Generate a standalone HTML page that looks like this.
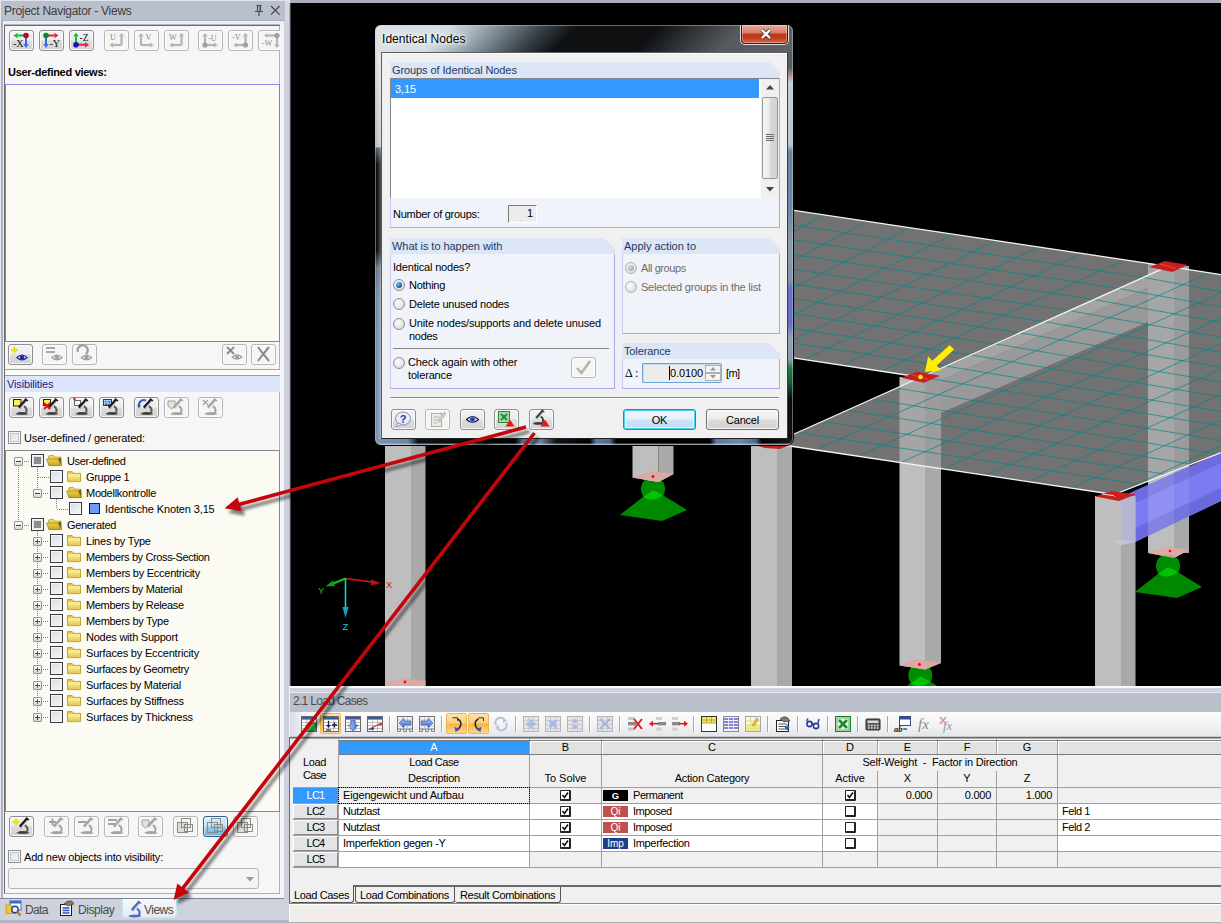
<!DOCTYPE html>
<html><head><meta charset="utf-8"><title>RFEM</title>
<style>
html,body{margin:0;padding:0;}
body{width:1221px;height:923px;position:relative;overflow:hidden;background:#f0f0f0;font-family:"Liberation Sans",sans-serif;font-size:11px;color:#000;}
div{position:absolute;box-sizing:border-box;}
svg{position:absolute;overflow:visible;}
.t{white-space:nowrap;line-height:14px;height:14px;}
.b{border:1px solid #8e8f8f;border-radius:3px;background:linear-gradient(#f4f4f4 0%,#ececec 48%,#dcdcdc 52%,#d2d2d2 100%);box-shadow:inset 0 0 0 1px rgba(255,255,255,.75);}
.bd{border:1px solid #b4b6ba;border-radius:3px;background:#f5f5f5;box-shadow:inset 0 0 0 1px rgba(255,255,255,.8);}
.cb{border:1px solid #8e8f8f;background:linear-gradient(135deg,#dcdfe4,#f6f6f8);box-shadow:inset 0 0 0 1px #f4f4f4, inset 0 0 0 2px #c4c8d0;}
.tcb{border:1px solid #3c3c3c;background:linear-gradient(135deg,#d8dce6,#f6f6fa);box-shadow:inset 0 0 0 1px #f4f6fa;}
</style></head>
<body>
<svg style="left:0;top:0" width="0" height="0"><defs><linearGradient id="fo" x1="0" y1="0" x2="0" y2="1"><stop offset="0" stop-color="#ecd248"/><stop offset="1" stop-color="#c8a41c"/></linearGradient><linearGradient id="fg" x1="0" y1="0" x2="0" y2="1"><stop offset="0" stop-color="#fcf4b0"/><stop offset="1" stop-color="#e8c840"/></linearGradient><linearGradient id="ga" x1="0" x2="1"><stop offset="0" stop-color="#b8d4fc"/><stop offset="1" stop-color="#3a6ad0"/></linearGradient><linearGradient id="gb" x1="0" y1="0" x2="0" y2="1"><stop offset="0" stop-color="#a8c8fc"/><stop offset="1" stop-color="#3a6ad0"/></linearGradient></defs></svg>
<svg style="left:0;top:0" width="1221" height="923" viewBox="0 0 1221 923"><defs><clipPath id="vp"><rect x="290" y="3" width="931" height="683"/></clipPath><clipPath id="s1"><polygon points="640.0,187.3 1168.0,266.3 919.5,377.0 640.0,334.7"/></clipPath><clipPath id="s2"><polygon points="773.0,443.5 1114.0,494.5 1221.0,452.5 1221.0,274.6 1168.0,266.3"/></clipPath><clipPath id="s12"><polygon points="640.0,187.3 1168.0,266.3 919.5,377.0 640.0,334.7"/><polygon points="773.0,443.5 1114.0,494.5 1221.0,452.5 1221.0,274.6 1168.0,266.3"/></clipPath></defs><g clip-path="url(#vp)"><rect x="290" y="3" width="931" height="683" fill="#000"/><rect x="1148" y="266" width="26" height="287" fill="#bebebe"/><rect x="1174" y="266" width="15" height="287" fill="#a9a9a9"/><polygon points="1148,553 1168,547 1189,550 1174,558" fill="#dcaaa6"/><circle cx="1170" cy="551" r="1.3" fill="#f00"/><polygon points="1168,566 1135.0,592.0 1177.0,598.0 1202.0,587.0" fill="#008800"/><circle cx="1168" cy="566" r="12.0" fill="#008c00"/><path d="M1168 567 L1158.0 574.0 Q1168 580.0 1178.0 572.0 Z" fill="#00c400"/><polygon points="1148,553 1168,547 1189,550 1174,558" fill="#dcaaa6" opacity=".9"/><circle cx="1170" cy="551" r="1.3" fill="#f00"/><polygon points="920.3,675.4 887.3,701.4 929.3,707.4 954.3,696.4" fill="#008800"/><circle cx="920.3" cy="675.4" r="12.0" fill="#008c00"/><path d="M920.3 676.4 L910.3 683.4 Q920.3 689.4 930.3 681.4 Z" fill="#00c400"/><polygon points="899.5,377 925,377 925,669.5 899.5,665.6" fill="#bebebe"/><polygon points="925,377 941,377 941,663 925,669.5" fill="#a9a9a9"/><polygon points="899.5,665.6 914.7,659 941,663 925.2,669.5" fill="#dca8a4"/><circle cx="919.5" cy="664.5" r="1.4" fill="#f00"/><rect x="751" y="444" width="26" height="242" fill="#bebebe"/><rect x="777" y="444" width="15" height="242" fill="#a9a9a9"/><rect x="385" y="444" width="26" height="242" fill="#bebebe"/><rect x="411" y="444" width="14.5" height="242" fill="#a9a9a9"/><polygon points="385,686 385,683 404,678 425.5,681 425.5,686" fill="#dcaaa6"/><circle cx="405" cy="682" r="1.4" fill="#f00"/><polygon points="653,489 620.0,515.0 662.0,521.0 687.0,510.0" fill="#008800"/><circle cx="653" cy="489" r="12.0" fill="#008c00"/><path d="M653 490 L643.0 497.0 Q653 503.0 663.0 495.0 Z" fill="#00c400"/><polygon points="632.5,477.5 652,471 673.5,474 658.5,482" fill="#dcaaa6"/><polygon points="632.5,444 658.5,444 658.5,482 632.5,477.5" fill="#bebebe"/><polygon points="658.5,444 673.5,444 673.5,474 658.5,482" fill="#a9a9a9"/><polygon points="632.5,477.5 652,471 673.5,474 658.5,482" fill="#dcaaa6"/><circle cx="653" cy="476.5" r="1.5" fill="#f00"/><polygon points="1121,497 1221,452.5 1221,501 1135,542 1114,545 1121,541" fill="#7c7cf2"/><polygon points="1121,497 1221,452.5 1221,463 1135,503" fill="#6c6cde"/><polygon points="1135,528 1221,488 1221,501 1135,542 1114,545" fill="#6a6adc"/><clipPath id="bm"><polygon points="1121,497 1221,452.5 1221,501 1135,542"/></clipPath><g clip-path="url(#bm)"><rect x="1148" y="440" width="26" height="120" fill="#fff" opacity=".16"/><rect x="1174" y="440" width="15" height="120" fill="#fff" opacity=".08"/></g><rect x="1095" y="496" width="26" height="190" fill="#bebebe"/><rect x="1121" y="496" width="14.5" height="190" fill="#a9a9a9"/><polygon points="1121,496 1135.5,496 1135.5,542 1121,545" fill="#b8b8d8" opacity=".85"/><polygon points="1112,541.5 1121,540 1135.5,541.5 1121,545.5" fill="#c8c8e0" opacity=".7"/><polygon points="640.0,187.3 1168.0,266.3 919.5,377.0 640.0,334.7" fill="#727272"/><polygon points="773.0,443.5 1114.0,494.5 1221.0,452.5 1221.0,274.6 1168.0,266.3" fill="#727272"/><g clip-path="url(#s12)"><polygon points="919.5,377 1168,266.3 1168,279 941,380" fill="#a4a4a4"/><polygon points="941,380 1168,279 1148,322 941,413" fill="#999999"/><rect x="899.5" y="377" width="25.5" height="140" fill="#a5a5a5"/><rect x="925" y="377" width="16" height="140" fill="#9c9c9c"/><rect x="1148" y="262" width="26" height="262" fill="#a6a6a6"/><rect x="1174" y="262" width="15" height="262" fill="#9b9b9b"/></g><g clip-path="url(#s1)" stroke="#008888" stroke-width="1" stroke-opacity=".7" fill="none"><line x1="1125.0" y1="259.9" x2="881.1" y2="371.2"/><line x1="1082.0" y1="253.4" x2="842.7" y2="365.3"/><line x1="1039.0" y1="247.0" x2="804.3" y2="359.5"/><line x1="996.0" y1="240.6" x2="765.9" y2="353.7"/><line x1="953.0" y1="234.1" x2="727.5" y2="347.8"/><line x1="910.0" y1="227.7" x2="689.1" y2="342.0"/><line x1="867.0" y1="221.3" x2="650.7" y2="336.1"/><line x1="824.0" y1="214.8" x2="612.3" y2="330.3"/><line x1="781.0" y1="208.4" x2="573.9" y2="324.5"/><line x1="738.0" y1="202.0" x2="535.5" y2="318.6"/><line x1="695.0" y1="195.5" x2="497.1" y2="312.8"/><line x1="652.0" y1="189.1" x2="458.7" y2="307.0"/><line x1="609.0" y1="182.7" x2="420.3" y2="301.1"/><line x1="1143.2" y1="277.4" x2="640.0" y2="202.0"/><line x1="1118.3" y1="288.4" x2="640.0" y2="216.8"/><line x1="1093.5" y1="299.5" x2="640.0" y2="231.5"/><line x1="1068.6" y1="310.6" x2="640.0" y2="246.3"/><line x1="1043.8" y1="321.6" x2="640.0" y2="261.0"/><line x1="1018.9" y1="332.7" x2="640.0" y2="275.7"/><line x1="994.0" y1="343.8" x2="640.0" y2="290.5"/><line x1="969.2" y1="354.9" x2="640.0" y2="305.2"/><line x1="944.4" y1="365.9" x2="640.0" y2="320.0"/></g><g clip-path="url(#s2)" stroke="#008888" stroke-width="1" stroke-opacity=".7" fill="none"><line x1="797.7" y1="432.4" x2="1139.6" y2="484.3"/><line x1="822.4" y1="421.4" x2="1165.2" y2="474.2"/><line x1="847.1" y1="410.3" x2="1190.8" y2="464.0"/><line x1="871.8" y1="399.2" x2="1216.4" y2="453.8"/><line x1="896.4" y1="388.1" x2="1242.0" y2="443.7"/><line x1="921.1" y1="377.1" x2="1267.6" y2="433.5"/><line x1="945.8" y1="366.0" x2="1293.2" y2="423.4"/><line x1="970.5" y1="354.9" x2="1318.8" y2="413.2"/><line x1="995.2" y1="343.8" x2="1344.4" y2="403.0"/><line x1="1019.9" y1="332.8" x2="1370.0" y2="392.9"/><line x1="1044.6" y1="321.7" x2="1395.6" y2="382.7"/><line x1="1069.2" y1="310.6" x2="1421.2" y2="372.5"/><line x1="1093.9" y1="299.5" x2="1446.8" y2="362.4"/><line x1="1118.6" y1="288.5" x2="1472.4" y2="352.2"/><line x1="1143.3" y1="277.4" x2="1498.0" y2="342.1"/><line x1="815.6" y1="449.9" x2="1209.5" y2="272.8"/><line x1="858.2" y1="456.2" x2="1251.0" y2="279.3"/><line x1="900.9" y1="462.6" x2="1292.5" y2="285.8"/><line x1="943.5" y1="469.0" x2="1334.0" y2="292.4"/><line x1="986.1" y1="475.4" x2="1375.5" y2="298.9"/><line x1="1028.8" y1="481.8" x2="1417.0" y2="305.4"/><line x1="1071.4" y1="488.1" x2="1458.5" y2="311.9"/><line x1="1114.0" y1="494.5" x2="1500.0" y2="318.4"/><line x1="1156.6" y1="500.9" x2="1541.5" y2="324.9"/><line x1="1199.2" y1="507.2" x2="1583.0" y2="331.5"/><line x1="1241.9" y1="513.6" x2="1624.5" y2="338.0"/><line x1="1284.5" y1="520.0" x2="1666.0" y2="344.5"/><line x1="1327.1" y1="526.4" x2="1707.5" y2="351.0"/></g><g stroke="#f4f4f4" stroke-width="1.3" fill="none"><polyline points="640.0,187.3 1168.0,266.3 1221.0,274.6"/><polyline points="640.0,334.7 919.5,377.0"/><polyline points="773.0,443.5 1168.0,266.3"/><polyline points="773.0,443.5 1114.0,494.5 1221.0,452.5"/></g><polygon points="1149,267 1165,261 1188,265 1172,272" fill="#c42020"/><path d="M1160 264 L1176 268.5" stroke="#f05050" stroke-width=".8"/><polygon points="901,377.8 917,371.8 940,375.8 924,382.8" fill="#c42020"/><path d="M912 374.8 L928 379.3" stroke="#f05050" stroke-width=".8"/><polygon points="1095,496.5 1111,491 1135.5,494.5 1119,501" fill="#c42020"/><path d="M1102 494 L1116 496" stroke="#fff" stroke-width=".8"/><circle cx="1115" cy="495" r="1.2" fill="#f00"/><polygon points="751,444 792,444 780,449 765,448" fill="#c42020"/><circle cx="920.5" cy="377" r="2.3" fill="#ffee00"/><path d="M925.0 372.0 L941.0 370.2 L936.7 365.5 L954.0 349.6 L949.7 344.9 L932.4 360.8 L928.1 356.2 Z" fill="#ffee00"/><line x1="345.5" y1="578.5" x2="372" y2="582" stroke="#e81010" stroke-width="1.6"/><polygon points="381,583 371,579.5 371,585.5" fill="#c01010"/><line x1="345.5" y1="578.5" x2="332" y2="584" stroke="#10c810" stroke-width="2"/><polygon points="325.5,586.5 333,580.5 335,586" fill="#10a010"/><line x1="345.5" y1="578.5" x2="345.5" y2="608" stroke="#10d0e0" stroke-width="1.6"/><polygon points="345.5,618 342.5,607 348.5,607" fill="#10a8b8"/><text x="386" y="588" font-size="9.5" fill="#e81010" font-family="Liberation Sans">X</text><text x="318" y="594" font-size="9.5" fill="#10c810" font-family="Liberation Sans">Y</text><text x="342.5" y="630" font-size="9.5" fill="#10d0e0" font-family="Liberation Sans">Z</text></g></svg>
<div style="left:290px;top:686px;width:931px;height:7px;background:#cdd2dd"></div>
<div style="left:290px;top:686px;width:931px;height:2px;background:#fafbfd"></div>
<div style="left:290px;top:692px;width:931px;height:1px;background:#e6e9f0"></div>
<div style="left:290px;top:693px;width:931px;height:19px;background:#b9c0cc"></div>
<div class="t ttl" style="left:293px;top:694.4px;font-size:12px;color:#4a4a4a;letter-spacing:-0.697px">2.1 Load Cases</div>
<div style="left:290px;top:712px;width:931px;height:25px;background:linear-gradient(90deg,rgba(214,219,232,1) 0,rgba(235,237,243,.6) 12px,rgba(240,240,244,0) 24px),linear-gradient(#fbfbfb,#f2f2f4 55%,#e4e5ea)"></div>
<div style="left:290px;top:736px;width:931px;height:1px;background:#c8c8cc"></div>
<svg style="left:301px;top:716px" width="16" height="16" viewBox="0 0 16 16" ><rect x=".5" y=".5" width="15" height="15" fill="#fcfcfc" stroke="#5a5a5a" stroke-width=".9"/><rect x="1" y="1" width="14" height="2.6" fill="#3a5aa8"/><path d="M1 6.5 h14 M1 9.5 h14 M1 12.5 h14 M5.5 3.6 v12 M10.5 3.6 v12" stroke="#9a9a9a" stroke-width=".6"/><rect x="7" y="7" width="8" height="8" fill="#58c058" stroke="#208020" stroke-width=".8"/></svg>
<div style="left:320px;top:713px;width:21px;height:21px;border:1px solid #e8b858;border-radius:2px;background:linear-gradient(#fde4a8 0%,#fbd080 45%,#f8b444 55%,#fbd890 100%)"></div>
<svg style="left:323px;top:716px" width="16" height="16" viewBox="0 0 16 16" ><rect x=".5" y=".5" width="15" height="15" fill="#fcfcfc" stroke="#5a5a5a" stroke-width=".9"/><rect x="1" y="1" width="14" height="2.6" fill="#3a5aa8"/><path d="M1 6.5 h14 M1 9.5 h14 M1 12.5 h14 M5.5 3.6 v12 M10.5 3.6 v12" stroke="#9a9a9a" stroke-width=".6"/><path d="M5.5 5 v5" stroke="#1a1a3a" stroke-width="1.3"/><path d="M3.2 9 h4.6 l-2.3 3z" fill="#1a1a3a"/><path d="M3 14 h5" stroke="#1a1a3a" stroke-width="1.1"/><path d="M9 9 h5 M11.5 6.5 v5" stroke="#1a1a3a" stroke-width="1.3"/></svg>
<svg style="left:345px;top:716px" width="16" height="16" viewBox="0 0 16 16" ><rect x=".5" y=".5" width="15" height="15" fill="#fcfcfc" stroke="#5a5a5a" stroke-width=".9"/><rect x="1" y="1" width="14" height="2.6" fill="#3a5aa8"/><path d="M1 6.5 h14 M1 9.5 h14 M1 12.5 h14 M5.5 3.6 v12 M10.5 3.6 v12" stroke="#9a9a9a" stroke-width=".6"/><path d="M6 4.5 h4 v4.5 h3 l-5 6 l-5 -6 h3z" fill="url(#ga)" stroke="#2a4a9c" stroke-width=".6"/></svg>
<svg style="left:367px;top:716px" width="16" height="16" viewBox="0 0 16 16" ><rect x=".5" y=".5" width="15" height="15" fill="#fcfcfc" stroke="#5a5a5a" stroke-width=".9"/><rect x="1" y="1" width="14" height="2.6" fill="#3a5aa8"/><path d="M1 6.5 h14 M1 9.5 h14 M1 12.5 h14 M5.5 3.6 v12 M10.5 3.6 v12" stroke="#9a9a9a" stroke-width=".6"/><path d="M1.5 13.5 L14.5 7" stroke="#b04848" stroke-width="1.1"/><path d="M1.5 13.8 l5.5 -2.6 l0 2.6z" fill="#2838d0"/><path d="M14.8 6.4 l-5 2.6 l5 0.6z" fill="#e02828"/></svg>
<div style="left:389px;top:716px;width:1px;height:16px;background:#a8a8a8"></div><div style="left:390px;top:716px;width:1px;height:16px;background:#fff"></div>
<svg style="left:397px;top:716px" width="16" height="16" viewBox="0 0 16 16" ><rect x=".5" y=".5" width="15" height="12.5" fill="#f0f0f0" stroke="#6a6a6a" stroke-width=".9"/><path d="M1 4 h14 M1 10 h14 M5.5 1 v12 M10.5 1 v12" stroke="#b8b8b8" stroke-width=".6"/><path d="M.5 13 v2.5 h3 v-2.5 M6.5 13 v2.5 h3 v-2.5 M12.5 13 v2.5 h3 v-2.5" stroke="#6a6a6a" stroke-width=".8" fill="none"/><path d="M2 7 L7 2.5 V5 H14 V9 H7 V11.5 Z" fill="url(#gb)" stroke="#2a4a9c" stroke-width=".6"/></svg>
<svg style="left:419px;top:716px" width="16" height="16" viewBox="0 0 16 16" ><rect x=".5" y=".5" width="15" height="12.5" fill="#f0f0f0" stroke="#6a6a6a" stroke-width=".9"/><path d="M1 4 h14 M1 10 h14 M5.5 1 v12 M10.5 1 v12" stroke="#b8b8b8" stroke-width=".6"/><path d="M.5 13 v2.5 h3 v-2.5 M6.5 13 v2.5 h3 v-2.5 M12.5 13 v2.5 h3 v-2.5" stroke="#6a6a6a" stroke-width=".8" fill="none"/><path d="M14 7 L9 2.5 V5 H2 V9 H9 V11.5 Z" fill="url(#gb)" stroke="#2a4a9c" stroke-width=".6"/></svg>
<div style="left:441px;top:716px;width:1px;height:16px;background:#a8a8a8"></div><div style="left:442px;top:716px;width:1px;height:16px;background:#fff"></div>
<div style="left:446px;top:713px;width:21px;height:21px;border:1px solid #e8b858;border-radius:2px;background:linear-gradient(#fde4a8 0%,#fbd080 45%,#f8b444 55%,#fbd890 100%)"></div>
<div style="left:468px;top:713px;width:21px;height:21px;border:1px solid #e8b858;border-radius:2px;background:linear-gradient(#fde4a8 0%,#fbd080 45%,#f8b444 55%,#fbd890 100%)"></div>
<svg style="left:449px;top:716px" width="16" height="16" viewBox="0 0 16 16" ><path d="M3.5 1.8 h5 v3" stroke="#333" stroke-width="1" fill="none"/><path d="M8.5 3 C13 5 13 10.5 8 14" stroke="#2a2a3a" stroke-width="1.6" fill="none"/><path d="M5.5 11 l5.5 2 l-4.5 3z" fill="#3a5ab8"/></svg>
<svg style="left:471px;top:716px" width="16" height="16" viewBox="0 0 16 16" ><path d="M12.5 5 v-3.2 h-5" stroke="#333" stroke-width="1" fill="none"/><path d="M7.5 3 C3 5 3 10.5 8 14" stroke="#2a2a3a" stroke-width="1.6" fill="none"/><path d="M10.5 11 l-5.5 2 l4.5 3z" fill="#3a5ab8"/></svg>
<svg style="left:493px;top:716px" width="16" height="16" viewBox="0 0 16 16" ><path d="M3 9 A5 5 0 0 1 12 4.5 M13 7 A5 5 0 0 1 4 11.5" stroke="#b8c4dc" stroke-width="2.2" fill="none"/><path d="M10 2 l4 3 l-4 2z M6 14 l-4 -3 l4 -2z" fill="#b8c4dc"/></svg>
<div style="left:515px;top:716px;width:1px;height:16px;background:#a8a8a8"></div><div style="left:516px;top:716px;width:1px;height:16px;background:#fff"></div>
<svg style="left:523px;top:716px" width="16" height="16" viewBox="0 0 16 16" ><rect x=".5" y=".5" width="15" height="15" fill="#e4e4e4" stroke="#a8a8a8" stroke-width=".8"/><path d="M1 4.5 h14 M1 8.5 h14 M1 12.5 h14 M5.5 1 v14 M10.5 1 v14" stroke="#c4c4c4" stroke-width=".8"/><path d="M8 3.5 v9 M3.5 8 h9" stroke="#a8b8ec" stroke-width="3"/></svg>
<svg style="left:545px;top:716px" width="16" height="16" viewBox="0 0 16 16" ><rect x=".5" y=".5" width="15" height="15" fill="#e4e4e4" stroke="#a8a8a8" stroke-width=".8"/><path d="M1 4.5 h14 M1 8.5 h14 M1 12.5 h14 M5.5 1 v14 M10.5 1 v14" stroke="#c4c4c4" stroke-width=".8"/><path d="M4.5 4.5 l7 7 M11.5 4.5 l-7 7" stroke="#a8b8ec" stroke-width="3"/></svg>
<svg style="left:567px;top:716px" width="16" height="16" viewBox="0 0 16 16" ><rect x=".5" y=".5" width="15" height="15" fill="#e4e4e4" stroke="#a8a8a8" stroke-width=".8"/><path d="M1 4.5 h14 M1 8.5 h14 M1 12.5 h14 M5.5 1 v14 M10.5 1 v14" stroke="#c4c4c4" stroke-width=".8"/><circle cx="8" cy="5" r="2" fill="#a8b8ec"/><circle cx="8" cy="11" r="2" fill="#a8b8ec"/></svg>
<div style="left:589px;top:716px;width:1px;height:16px;background:#a8a8a8"></div><div style="left:590px;top:716px;width:1px;height:16px;background:#fff"></div>
<svg style="left:597px;top:716px" width="16" height="16" viewBox="0 0 16 16" ><rect x=".5" y=".5" width="15" height="15" fill="#e4e4e4" stroke="#a8a8a8" stroke-width=".8"/><path d="M1 4.5 h14 M1 8.5 h14 M1 12.5 h14 M5.5 1 v14 M10.5 1 v14" stroke="#c4c4c4" stroke-width=".8"/><path d="M3 3 L13 13 M13 3 L3 13" stroke="#a4b4d8" stroke-width="1.8"/></svg>
<div style="left:619px;top:716px;width:1px;height:16px;background:#a8a8a8"></div><div style="left:620px;top:716px;width:1px;height:16px;background:#fff"></div>
<svg style="left:627px;top:716px" width="18" height="16" viewBox="0 0 18 16" ><rect x="1" y="1" width="7" height="3" fill="#c8c8c8"/><rect x="1" y="6" width="8" height="3.4" fill="#8a8a8a"/><rect x="1" y="11.5" width="7" height="3" fill="#c8c8c8"/><path d="M7 3 L15 13 M15 3 L7 13" stroke="#d82020" stroke-width="2"/></svg>
<svg style="left:649px;top:716px" width="18" height="16" viewBox="0 0 18 16" ><rect x="7" y="1" width="6" height="3" fill="#d0d0d0"/><rect x="9" y="6" width="8" height="3.4" fill="#8a8a8a"/><rect x="7" y="11.5" width="6" height="3" fill="#d0d0d0"/><path d="M1 7.7 h8" stroke="#d82020" stroke-width="1.6"/><path d="M0 7.7 l4 -3 v6z" fill="#d82020"/></svg>
<svg style="left:671px;top:716px" width="18" height="16" viewBox="0 0 18 16" ><rect x="1" y="1" width="6" height="3" fill="#d0d0d0"/><rect x="1" y="6" width="8" height="3.4" fill="#8a8a8a"/><rect x="1" y="11.5" width="6" height="3" fill="#d0d0d0"/><path d="M8 7.7 h8" stroke="#d82020" stroke-width="1.6"/><path d="M17 7.7 l-4 -3 v6z" fill="#d82020"/></svg>
<div style="left:693px;top:716px;width:1px;height:16px;background:#a8a8a8"></div><div style="left:694px;top:716px;width:1px;height:16px;background:#fff"></div>
<svg style="left:701px;top:716px" width="16" height="16" viewBox="0 0 16 16" ><rect x=".5" y=".5" width="15" height="15" fill="#fff" stroke="#333"/><rect x="1" y="1" width="14" height="6" fill="#f4e860"/><path d="M1 4 h14 M1 7 h14 M5.5 1 v6 M10.5 1 v6" stroke="#a8a020" stroke-width=".8"/></svg>
<svg style="left:723px;top:716px" width="16" height="16" viewBox="0 0 16 16" ><rect x=".5" y=".5" width="15" height="15" fill="#f4f4f4" stroke="#8a8a8a"/><path d="M1 3 h14 M1 6 h14 M1 9 h14 M1 12 h14" stroke="#5a60d0" stroke-width="1.6"/><path d="M5.5 1 v14 M10.5 1 v14" stroke="#f4f4f4" stroke-width=".8"/></svg>
<svg style="left:745px;top:716px" width="16" height="16" viewBox="0 0 16 16" ><rect x=".5" y=".5" width="15" height="15" fill="#f8f8e8" stroke="#a8a8a0"/><path d="M1 5 h14 M1 9 h14 M1 12.5 h14 M5.5 1 v14 M10.5 1 v14" stroke="#d8d070" stroke-width=".8"/><rect x="1" y="9" width="14" height="6" fill="#ece478" opacity=".8"/><path d="M7 9 L12 2 L13.5 3.5 L9 10Z" fill="#e8d020" stroke="#8a7a10" stroke-width=".5"/></svg>
<div style="left:767px;top:716px;width:1px;height:16px;background:#a8a8a8"></div><div style="left:768px;top:716px;width:1px;height:16px;background:#fff"></div>
<svg style="left:775px;top:716px" width="16" height="16" viewBox="0 0 16 16" ><rect x="1.5" y="4.5" width="12" height="11" fill="#fff" stroke="#222"/><path d="M3.5 8 h8 M3.5 10.5 h8 M3.5 13 h8" stroke="#555" stroke-width="1"/><path d="M5 3 Q9 -1 13 2 L15 5 L9 6Z" fill="#8a7868" stroke="#3a3028" stroke-width=".6"/><path d="M12 8 v5 M10 11 l2 3 l2 -3z" fill="#2a5ad8" stroke="#2a5ad8"/></svg>
<div style="left:797px;top:716px;width:1px;height:16px;background:#a8a8a8"></div><div style="left:798px;top:716px;width:1px;height:16px;background:#fff"></div>
<svg style="left:805px;top:716px" width="16" height="16" viewBox="0 0 16 16" ><circle cx="4.5" cy="8" r="2.6" fill="none" stroke="#2a3a9c" stroke-width="1.6"/><circle cx="11" cy="10" r="2.6" fill="none" stroke="#2a3a9c" stroke-width="1.6"/><path d="M7 7 L9 9 M1.5 5 L3 2.5 M13 7 L14 3" stroke="#2a3a9c" stroke-width="1.4"/></svg>
<div style="left:827px;top:716px;width:1px;height:16px;background:#a8a8a8"></div><div style="left:828px;top:716px;width:1px;height:16px;background:#fff"></div>
<svg style="left:835px;top:716px" width="16" height="16" viewBox="0 0 16 16" ><rect x=".5" y=".5" width="15" height="15" fill="#f4fff4" stroke="#1a7a2a"/><rect x="2" y="2" width="12" height="12" fill="#e8f8e8" stroke="#2a9a3a" stroke-width=".8"/><path d="M4 4 L12 12 M12 4 L4 12" stroke="#1a8a2a" stroke-width="2.6"/></svg>
<div style="left:857px;top:716px;width:1px;height:16px;background:#a8a8a8"></div><div style="left:858px;top:716px;width:1px;height:16px;background:#fff"></div>
<svg style="left:865px;top:716px" width="16" height="16" viewBox="0 0 16 16" ><rect x="1" y="3" width="14" height="11" rx="1" fill="#5a5a5a" stroke="#2a2a2a"/><rect x="2.5" y="4.5" width="11" height="2.5" fill="#d8d8d8"/><path d="M3 9.5 h1.6 M6 9.5 h1.6 M9 9.5 h1.6 M12 9.5 h1.4 M3 12 h1.6 M6 12 h1.6 M9 12 h1.6 M12 12 h1.4" stroke="#e8e8e8" stroke-width="1.3"/></svg>
<div style="left:887px;top:716px;width:1px;height:16px;background:#a8a8a8"></div><div style="left:888px;top:716px;width:1px;height:16px;background:#fff"></div>
<svg style="left:894px;top:716px" width="18" height="16" viewBox="0 0 18 16" ><rect x="5.5" y=".5" width="11" height="9" fill="#fff" stroke="#3a4a8c"/><rect x="6" y="1" width="10" height="2.5" fill="#3a4a8c"/><text x="0" y="15.5" font-family="Liberation Serif" font-style="italic" font-weight="bold" font-size="8.5" fill="#111">ab=</text></svg>
<svg style="left:918px;top:716px" width="16" height="16" viewBox="0 0 16 16" ><text x="0" y="12.5" font-family="Liberation Serif" font-style="italic" font-size="15" fill="#8a8a8a">fx</text></svg>
<svg style="left:939px;top:716px" width="18" height="16" viewBox="0 0 18 16" ><text x="4" y="13.5" font-family="Liberation Serif" font-style="italic" font-size="13" fill="#9a9a9a">fx</text><path d="M1 1 L7 8 M7 1 L1 8" stroke="#e8909c" stroke-width="1.6"/></svg>
<div style="left:289px;top:737px;width:932px;height:149px;background:#f0f0f0"></div>
<div style="left:289px;top:737px;width:932px;height:1px;background:#6a6a6a"></div>
<div style="left:290px;top:738px;width:931px;height:1px;background:#a8a8a8"></div>
<div style="left:289px;top:737px;width:1px;height:166px;background:#6a6a6a"></div>
<div style="left:293px;top:739px;width:928px;height:129px;background:#a0a0a0"></div>
<div style="left:293px;top:741px;width:45px;height:13px;background:#e2e2e2;border-top:1px solid #fff;border-left:1px solid #fff"></div>
<div style="left:293px;top:739px;width:45px;height:1px;background:#f8f8f8"></div>
<div style="left:293px;top:755px;width:45px;height:32px;background:#f0f0f0"></div>
<div style="left:339px;top:741px;width:190px;height:13px;background:#3399ff"></div>
<div style="left:339px;top:739px;width:190px;height:1px;background:#f8f8f8"></div>
<div class="t hl" style="left:339px;top:740px;width:190px;text-align:center;color:#fff">A</div>
<div style="left:339px;top:755px;width:190px;height:32px;background:#f0f0f0"></div>
<div style="left:530px;top:741px;width:71px;height:13px;background:#e2e2e2;border-top:1px solid #fff;border-left:1px solid #fff"></div>
<div style="left:530px;top:739px;width:71px;height:1px;background:#f8f8f8"></div>
<div class="t hl" style="left:530px;top:740px;width:71px;text-align:center">B</div>
<div style="left:530px;top:755px;width:71px;height:32px;background:#f0f0f0"></div>
<div style="left:602px;top:741px;width:220px;height:13px;background:#e2e2e2;border-top:1px solid #fff;border-left:1px solid #fff"></div>
<div style="left:602px;top:739px;width:220px;height:1px;background:#f8f8f8"></div>
<div class="t hl" style="left:602px;top:740px;width:220px;text-align:center">C</div>
<div style="left:602px;top:755px;width:220px;height:32px;background:#f0f0f0"></div>
<div style="left:823px;top:741px;width:54px;height:13px;background:#e2e2e2;border-top:1px solid #fff;border-left:1px solid #fff"></div>
<div style="left:823px;top:739px;width:54px;height:1px;background:#f8f8f8"></div>
<div class="t hl" style="left:823px;top:740px;width:54px;text-align:center">D</div>
<div style="left:823px;top:755px;width:54px;height:32px;background:#f0f0f0"></div>
<div style="left:878px;top:741px;width:59px;height:13px;background:#e2e2e2;border-top:1px solid #fff;border-left:1px solid #fff"></div>
<div style="left:878px;top:739px;width:59px;height:1px;background:#f8f8f8"></div>
<div class="t hl" style="left:878px;top:740px;width:59px;text-align:center">E</div>
<div style="left:878px;top:755px;width:59px;height:32px;background:#f0f0f0"></div>
<div style="left:938px;top:741px;width:58px;height:13px;background:#e2e2e2;border-top:1px solid #fff;border-left:1px solid #fff"></div>
<div style="left:938px;top:739px;width:58px;height:1px;background:#f8f8f8"></div>
<div class="t hl" style="left:938px;top:740px;width:58px;text-align:center">F</div>
<div style="left:938px;top:755px;width:58px;height:32px;background:#f0f0f0"></div>
<div style="left:997px;top:741px;width:60px;height:13px;background:#e2e2e2;border-top:1px solid #fff;border-left:1px solid #fff"></div>
<div style="left:997px;top:739px;width:60px;height:1px;background:#f8f8f8"></div>
<div class="t hl" style="left:997px;top:740px;width:60px;text-align:center">G</div>
<div style="left:997px;top:755px;width:60px;height:32px;background:#f0f0f0"></div>
<div style="left:1058px;top:741px;width:163px;height:13px;background:#e2e2e2;border-top:1px solid #fff;border-left:1px solid #fff"></div>
<div style="left:1058px;top:739px;width:163px;height:1px;background:#f8f8f8"></div>
<div style="left:1058px;top:755px;width:163px;height:32px;background:#f0f0f0"></div>
<div style="left:339px;top:740px;width:882px;height:1px;background:#7a7a7a"></div>
<div style="left:339px;top:754px;width:882px;height:1px;background:#7a7a7a"></div>
<div style="left:293px;top:739px;width:45px;height:16px;background:#f0f0f0"></div>
<div style="left:877px;top:755px;width:121px;height:16px;background:#f0f0f0"></div>
<div style="left:823px;top:755px;width:234px;height:16px;background:#f0f0f0"></div>
<div class="t hd" style="left:292px;top:755px;width:45px;text-align:center;letter-spacing:-0.421px">Load</div>
<div class="t hd" style="left:292px;top:768px;width:45px;text-align:center;letter-spacing:-0.672px">Case</div>
<div class="t hd" style="left:339px;top:755px;width:190px;text-align:center;letter-spacing:-0.435px">Load Case</div>
<div class="t hd" style="left:339px;top:771px;width:190px;text-align:center;letter-spacing:-0.285px">Description</div>
<div class="t hd" style="left:530px;top:771px;width:71px;text-align:center;letter-spacing:-0.038px">To Solve</div>
<div class="t hd" style="left:602px;top:771px;width:220px;text-align:center;letter-spacing:-0.238px">Action Category</div>
<div class="t hd" style="left:823px;top:771px;width:54px;text-align:center;letter-spacing:-0.045px">Active</div>
<div class="t hd" style="left:878px;top:771px;width:59px;text-align:center">X</div>
<div class="t hd" style="left:938px;top:771px;width:58px;text-align:center">Y</div>
<div class="t hd" style="left:997px;top:771px;width:60px;text-align:center">Z</div>
<div class="t hd" style="left:823px;top:755px;width:234px;text-align:center;letter-spacing:-0.191px">Self-Weight&nbsp; -&nbsp; Factor in Direction</div>
<div style="left:293px;top:788px;width:45px;height:15px;background:#3399ff"></div>
<div class="t lc" style="left:293px;top:788px;width:45px;text-align:center;color:#fff;letter-spacing:-0.796px">LC1</div>
<div style="left:339px;top:788px;width:190px;height:15px;background:#f0f0f0;outline:1px dotted #000;outline-offset:0px"></div>
<div class="t rc" style="left:343px;top:788.3px;;letter-spacing:-0.155px">Eigengewicht und Aufbau</div>
<div style="left:530px;top:788px;width:71px;height:15px;background:#f0f0f0"></div>
<div style="left:602px;top:788px;width:220px;height:15px;background:#f0f0f0"></div>
<div style="left:823px;top:788px;width:54px;height:15px;background:#f0f0f0"></div>
<div style="left:878px;top:788px;width:59px;height:15px;background:#f0f0f0"></div>
<div style="left:938px;top:788px;width:58px;height:15px;background:#f0f0f0"></div>
<div style="left:997px;top:788px;width:60px;height:15px;background:#f0f0f0"></div>
<div style="left:1058px;top:788px;width:163px;height:15px;background:#f0f0f0"></div>
<div style="left:560px;top:790px;width:11px;height:11px;background:#fff;border:1px solid #222;border-right:2px solid #222;border-bottom:2px solid #222;border-radius:1px"></div><svg style="left:560px;top:790px" width="11" height="11" viewBox="0 0 11 11" ><path d="M2.5 5 L4.5 7.5 L8 2.5" stroke="#111" stroke-width="1.6" fill="none"/></svg>
<div style="left:603px;top:790px;width:25px;height:11px;background:#000"></div>
<div class="t" style="left:603px;top:789px;width:25px;text-align:center;color:#fff;font-size:9.5px;font-weight:bold;line-height:13px">G</div>
<div class="t rc" style="left:633px;top:788.3px;;letter-spacing:-0.446px">Permanent</div>
<div style="left:845px;top:790px;width:11px;height:11px;background:#fff;border:1px solid #222;border-right:2px solid #222;border-bottom:2px solid #222;border-radius:1px"></div><svg style="left:845px;top:790px" width="11" height="11" viewBox="0 0 11 11" ><path d="M2.5 5 L4.5 7.5 L8 2.5" stroke="#111" stroke-width="1.6" fill="none"/></svg>
<div class="t rc" style="left:878px;top:788.3px;width:54px;text-align:right;letter-spacing:-0.266px">0.000</div>
<div class="t rc" style="left:938px;top:788.3px;width:53px;text-align:right;letter-spacing:-0.266px">0.000</div>
<div class="t rc" style="left:997px;top:788.3px;width:55px;text-align:right;letter-spacing:-0.266px">1.000</div>
<div style="left:293px;top:804px;width:45px;height:15px;background:#e4e4e4;border-top:1px solid #fff;border-left:1px solid #fff;border-bottom:1px solid #8a8a8a;border-right:1px solid #8a8a8a"></div>
<div class="t lc" style="left:293px;top:804px;width:45px;text-align:center;letter-spacing:-0.796px">LC2</div>
<div style="left:339px;top:804px;width:190px;height:15px;background:#fff"></div>
<div class="t rc" style="left:343px;top:804.3px;;letter-spacing:-0.381px">Nutzlast</div>
<div style="left:530px;top:804px;width:71px;height:15px;background:#fff"></div>
<div style="left:602px;top:804px;width:220px;height:15px;background:#fff"></div>
<div style="left:823px;top:804px;width:54px;height:15px;background:#fff"></div>
<div style="left:878px;top:804px;width:59px;height:15px;background:#f0f0f0"></div>
<div style="left:938px;top:804px;width:58px;height:15px;background:#f0f0f0"></div>
<div style="left:997px;top:804px;width:60px;height:15px;background:#f0f0f0"></div>
<div style="left:1058px;top:804px;width:163px;height:15px;background:#fff"></div>
<div style="left:560px;top:806px;width:11px;height:11px;background:#fff;border:1px solid #222;border-right:2px solid #222;border-bottom:2px solid #222;border-radius:1px"></div><svg style="left:560px;top:806px" width="11" height="11" viewBox="0 0 11 11" ><path d="M2.5 5 L4.5 7.5 L8 2.5" stroke="#111" stroke-width="1.6" fill="none"/></svg>
<div style="left:603px;top:806px;width:25px;height:11px;background:#c0504d"></div>
<div class="t" style="left:603px;top:805px;width:25px;text-align:center;color:#fff;font-size:10px;line-height:13px">Qi</div>
<div class="t rc" style="left:633px;top:804.3px;;letter-spacing:-0.500px">Imposed</div>
<div style="left:845px;top:806px;width:11px;height:11px;background:#fff;border:1px solid #222;border-right:2px solid #222;border-bottom:2px solid #222;border-radius:1px"></div>
<div class="t rc" style="left:1062px;top:804.3px;;letter-spacing:-0.430px">Feld 1</div>
<div style="left:293px;top:820px;width:45px;height:15px;background:#e4e4e4;border-top:1px solid #fff;border-left:1px solid #fff;border-bottom:1px solid #8a8a8a;border-right:1px solid #8a8a8a"></div>
<div class="t lc" style="left:293px;top:820px;width:45px;text-align:center;letter-spacing:-0.796px">LC3</div>
<div style="left:339px;top:820px;width:190px;height:15px;background:#fff"></div>
<div class="t rc" style="left:343px;top:820.3px;;letter-spacing:-0.381px">Nutzlast</div>
<div style="left:530px;top:820px;width:71px;height:15px;background:#fff"></div>
<div style="left:602px;top:820px;width:220px;height:15px;background:#fff"></div>
<div style="left:823px;top:820px;width:54px;height:15px;background:#fff"></div>
<div style="left:878px;top:820px;width:59px;height:15px;background:#f0f0f0"></div>
<div style="left:938px;top:820px;width:58px;height:15px;background:#f0f0f0"></div>
<div style="left:997px;top:820px;width:60px;height:15px;background:#f0f0f0"></div>
<div style="left:1058px;top:820px;width:163px;height:15px;background:#fff"></div>
<div style="left:560px;top:822px;width:11px;height:11px;background:#fff;border:1px solid #222;border-right:2px solid #222;border-bottom:2px solid #222;border-radius:1px"></div><svg style="left:560px;top:822px" width="11" height="11" viewBox="0 0 11 11" ><path d="M2.5 5 L4.5 7.5 L8 2.5" stroke="#111" stroke-width="1.6" fill="none"/></svg>
<div style="left:603px;top:822px;width:25px;height:11px;background:#c0504d"></div>
<div class="t" style="left:603px;top:821px;width:25px;text-align:center;color:#fff;font-size:10px;line-height:13px">Qi</div>
<div class="t rc" style="left:633px;top:820.3px;;letter-spacing:-0.500px">Imposed</div>
<div style="left:845px;top:822px;width:11px;height:11px;background:#fff;border:1px solid #222;border-right:2px solid #222;border-bottom:2px solid #222;border-radius:1px"></div>
<div class="t rc" style="left:1062px;top:820.3px;;letter-spacing:-0.430px">Feld 2</div>
<div style="left:293px;top:836px;width:45px;height:15px;background:#e4e4e4;border-top:1px solid #fff;border-left:1px solid #fff;border-bottom:1px solid #8a8a8a;border-right:1px solid #8a8a8a"></div>
<div class="t lc" style="left:293px;top:836px;width:45px;text-align:center;letter-spacing:-0.796px">LC4</div>
<div style="left:339px;top:836px;width:190px;height:15px;background:#fff"></div>
<div class="t rc" style="left:343px;top:836.3px;;letter-spacing:-0.264px">Imperfektion gegen -Y</div>
<div style="left:530px;top:836px;width:71px;height:15px;background:#fff"></div>
<div style="left:602px;top:836px;width:220px;height:15px;background:#fff"></div>
<div style="left:823px;top:836px;width:54px;height:15px;background:#fff"></div>
<div style="left:878px;top:836px;width:59px;height:15px;background:#f0f0f0"></div>
<div style="left:938px;top:836px;width:58px;height:15px;background:#f0f0f0"></div>
<div style="left:997px;top:836px;width:60px;height:15px;background:#f0f0f0"></div>
<div style="left:1058px;top:836px;width:163px;height:15px;background:#fff"></div>
<div style="left:560px;top:838px;width:11px;height:11px;background:#fff;border:1px solid #222;border-right:2px solid #222;border-bottom:2px solid #222;border-radius:1px"></div><svg style="left:560px;top:838px" width="11" height="11" viewBox="0 0 11 11" ><path d="M2.5 5 L4.5 7.5 L8 2.5" stroke="#111" stroke-width="1.6" fill="none"/></svg>
<div style="left:603px;top:838px;width:25px;height:11px;background:#1f3f8c"></div>
<div class="t" style="left:603px;top:837px;width:25px;text-align:center;color:#fff;font-size:10px;line-height:13px">Imp</div>
<div class="t rc" style="left:633px;top:836.3px;;letter-spacing:-0.328px">Imperfection</div>
<div style="left:845px;top:838px;width:11px;height:11px;background:#fff;border:1px solid #222;border-right:2px solid #222;border-bottom:2px solid #222;border-radius:1px"></div>
<div style="left:293px;top:852px;width:45px;height:15px;background:#e4e4e4;border-top:1px solid #fff;border-left:1px solid #fff;border-bottom:1px solid #8a8a8a;border-right:1px solid #8a8a8a"></div>
<div class="t lc" style="left:293px;top:852px;width:45px;text-align:center;letter-spacing:-0.796px">LC5</div>
<div style="left:339px;top:852px;width:190px;height:15px;background:#fff"></div>
<div class="t rc" style="left:343px;top:852.3px;"></div>
<div style="left:530px;top:852px;width:71px;height:15px;background:#f0f0f0"></div>
<div style="left:602px;top:852px;width:220px;height:15px;background:#f0f0f0"></div>
<div style="left:823px;top:852px;width:54px;height:15px;background:#f0f0f0"></div>
<div style="left:878px;top:852px;width:59px;height:15px;background:#f0f0f0"></div>
<div style="left:938px;top:852px;width:58px;height:15px;background:#f0f0f0"></div>
<div style="left:997px;top:852px;width:60px;height:15px;background:#f0f0f0"></div>
<div style="left:1058px;top:852px;width:163px;height:15px;background:#f0f0f0"></div>
<div style="left:293px;top:868px;width:928px;height:18px;background:#f0f0f0"></div>
<div style="left:290px;top:885px;width:931px;height:2px;background:#6a6a6a"></div>
<div style="left:290px;top:887px;width:931px;height:17px;background:#f0f0f0"></div>
<div style="left:289px;top:903px;width:932px;height:1px;background:#8a8a8a"></div>
<div style="left:289px;top:904px;width:932px;height:18px;background:#f0edeb;border-left:1px solid #fff;border-top:1px solid #fff"></div>
<div style="left:285px;top:922px;width:936px;height:1px;background:#a8b0c0"></div>
<div style="left:290px;top:885px;width:64px;height:18px;background:#f0f0f0;border-right:1px solid #555;border-bottom:1px solid #555;border-radius:0 0 3px 3px"></div>
<div class="t tb" style="left:294px;top:888px;;letter-spacing:-0.352px">Load Cases</div>
<div style="left:355px;top:887px;width:100px;height:16px;border-right:1px solid #555;border-bottom:1px solid #555;border-left:1px solid #555;border-radius:0 0 3px 3px"></div>
<div class="t tb" style="left:360px;top:888px;;letter-spacing:-0.347px">Load Combinations</div>
<div style="left:455px;top:887px;width:106px;height:16px;border-right:1px solid #555;border-bottom:1px solid #555;border-radius:0 0 3px 3px"></div>
<div class="t tb" style="left:460px;top:888px;;letter-spacing:-0.337px">Result Combinations</div>
<div style="left:0px;top:0px;width:289px;height:923px;background:#d3d8e4"></div>
<div style="left:0px;top:0px;width:289px;height:1px;background:#dfe3ec"></div>
<div style="left:290px;top:0px;width:931px;height:3px;background:#abafc0"></div>
<div style="left:1px;top:1px;width:284px;height:20px;background:#b9c0cc;border-bottom:1px solid #a9afbd"></div>
<div style="left:0px;top:0px;width:1px;height:923px;background:#e6e9f0"></div>
<div class="t tt" style="left:4px;top:3.5px;font-size:12px;color:#3c3c3c;line-height:14px;letter-spacing:-0.280px">Project Navigator - Views</div>
<svg style="left:253px;top:4px" width="12" height="14" viewBox="0 0 12 14" ><path d="M3.5 1.5 H8.5 M4.5 1.5 V7.5 M7.5 1.5 V7.5 M2 7.5 H10 M6 7.5 V12" stroke="#4a4a4a" stroke-width="1.2" fill="none"/><rect x="6.6" y="2" width="1.2" height="5.4" fill="#4a4a4a"/></svg>
<svg style="left:270px;top:5px" width="11" height="11" viewBox="0 0 11 11" ><path d="M1 1 L9.6 9.6 M9.6 1 L1 9.6" stroke="#4a4a4a" stroke-width="1.3"/></svg>
<div style="left:1px;top:21px;width:283px;height:877px;background:#f4f5fa"></div>
<div style="left:1px;top:21px;width:283px;height:4px;background:#e9edf8"></div>
<div style="left:4px;top:24px;width:276px;height:1px;background:#b4b6bc"></div>
<div style="left:284px;top:21px;width:5px;height:877px;background:#cdd2dd"></div>
<div style="left:289px;top:3px;width:1px;height:683px;background:#b0b5c2"></div>
<div style="left:290px;top:3px;width:1px;height:683px;background:#45484e"></div>
<div style="left:4px;top:25px;width:276px;height:869px;background:#f6f6f6;border-left:1px solid #6a6a6a;border-top:1px solid #6c6c6c;border-right:1px solid #a8a8f0;border-bottom:1px solid #a8a8f0"></div>
<div style="left:1px;top:21px;width:3px;height:877px;background:linear-gradient(90deg,#aab0c0 0 2px,#f0f2f8 2px)"></div>
<div class="b" style="left:9px;top:30px;width:25px;height:21px;"></div><svg style="left:9px;top:30px" width="25" height="21" viewBox="0 0 25 21" ><line x1="17" y1="5.5" x2="8.50" y2="5.50" stroke="#18b838" stroke-width="2"/><polygon points="4.5,5.5 8.50,2.80 8.50,8.20" fill="#18b838"/><line x1="17" y1="5.5" x2="17.00" y2="14.00" stroke="#3a6ae8" stroke-width="2"/><polygon points="17,18 14.30,14.00 19.70,14.00" fill="#3a6ae8"/><circle cx="17" cy="5.5" r="2.8" fill="#d00018"/><text x="4" y="17" font-family="Liberation Serif" font-size="10" fill="#111">-X</text></svg>
<div class="b" style="left:39px;top:30px;width:25px;height:21px;"></div><svg style="left:39px;top:30px" width="25" height="21" viewBox="0 0 25 21" ><line x1="7" y1="5.5" x2="15.50" y2="5.50" stroke="#e8203c" stroke-width="2"/><polygon points="19.5,5.5 15.50,8.20 15.50,2.80" fill="#e8203c"/><line x1="7" y1="5.5" x2="7.00" y2="14.00" stroke="#3a6ae8" stroke-width="2"/><polygon points="7,18 4.30,14.00 9.70,14.00" fill="#3a6ae8"/><circle cx="7" cy="5.5" r="2.8" fill="#009018"/><text x="10.5" y="17" font-family="Liberation Serif" font-size="10" fill="#111">-Y</text></svg>
<div class="b" style="left:69px;top:30px;width:25px;height:21px;"></div><svg style="left:69px;top:30px" width="25" height="21" viewBox="0 0 25 21" ><line x1="7" y1="14.7" x2="7.00" y2="6.50" stroke="#18b838" stroke-width="2"/><polygon points="7,2.5 9.70,6.50 4.30,6.50" fill="#18b838"/><line x1="7" y1="14.7" x2="16.00" y2="14.70" stroke="#e8203c" stroke-width="2"/><polygon points="20,14.7 16.00,17.40 16.00,12.00" fill="#e8203c"/><circle cx="7" cy="14.7" r="2.8" fill="#1018b0"/><text x="10.5" y="11" font-family="Liberation Serif" font-size="9.5" fill="#111">-Z</text></svg>
<div class="bd" style="left:104px;top:30px;width:25px;height:21px;"></div><svg style="left:104px;top:30px" width="25" height="21" viewBox="0 0 25 21" ><line x1="17.5" y1="15" x2="17.50" y2="6.50" stroke="#b4b4ac" stroke-width="2.2"/><polygon points="17.5,3 20.10,6.50 14.90,6.50" fill="#b4b4ac"/><line x1="17.5" y1="15" x2="9.00" y2="15.00" stroke="#b4b4ac" stroke-width="2.2"/><polygon points="5.5,15 9.00,12.40 9.00,17.60" fill="#b4b4ac"/><text x="6" y="10" font-family="Liberation Serif" font-size="8" fill="#8a8a84">U</text></svg>
<div class="bd" style="left:134px;top:30px;width:25px;height:21px;"></div><svg style="left:134px;top:30px" width="25" height="21" viewBox="0 0 25 21" ><line x1="7" y1="15" x2="7.00" y2="6.50" stroke="#b4b4ac" stroke-width="2.2"/><polygon points="7,3 9.60,6.50 4.40,6.50" fill="#b4b4ac"/><line x1="7" y1="15" x2="16.00" y2="15.00" stroke="#b4b4ac" stroke-width="2.2"/><polygon points="19.5,15 16.00,17.60 16.00,12.40" fill="#b4b4ac"/><text x="11.5" y="10" font-family="Liberation Serif" font-size="8" fill="#8a8a84">V</text></svg>
<div class="bd" style="left:164px;top:30px;width:25px;height:21px;"></div><svg style="left:164px;top:30px" width="25" height="21" viewBox="0 0 25 21" ><line x1="17.5" y1="15" x2="17.50" y2="6.50" stroke="#b4b4ac" stroke-width="2.2"/><polygon points="17.5,3 20.10,6.50 14.90,6.50" fill="#b4b4ac"/><line x1="17.5" y1="15" x2="9.00" y2="15.00" stroke="#b4b4ac" stroke-width="2.2"/><polygon points="5.5,15 9.00,12.40 9.00,17.60" fill="#b4b4ac"/><text x="5" y="10" font-family="Liberation Serif" font-size="8" fill="#8a8a84">W</text></svg>
<div class="bd" style="left:198px;top:30px;width:25px;height:21px;"></div><svg style="left:198px;top:30px" width="25" height="21" viewBox="0 0 25 21" ><line x1="7" y1="15" x2="7.00" y2="6.50" stroke="#b4b4ac" stroke-width="2.2"/><polygon points="7,3 9.60,6.50 4.40,6.50" fill="#b4b4ac"/><line x1="7" y1="15" x2="16.00" y2="15.00" stroke="#b4b4ac" stroke-width="2.2"/><polygon points="19.5,15 16.00,17.60 16.00,12.40" fill="#b4b4ac"/><circle cx="7" cy="15" r="2.6" fill="#a0a098"/><text x="10" y="11" font-family="Liberation Serif" font-size="8" fill="#8a8a84">-U</text></svg>
<div class="bd" style="left:228px;top:30px;width:25px;height:21px;"></div><svg style="left:228px;top:30px" width="25" height="21" viewBox="0 0 25 21" ><line x1="17.5" y1="15" x2="17.50" y2="6.50" stroke="#b4b4ac" stroke-width="2.2"/><polygon points="17.5,3 20.10,6.50 14.90,6.50" fill="#b4b4ac"/><line x1="17.5" y1="15" x2="9.00" y2="15.00" stroke="#b4b4ac" stroke-width="2.2"/><polygon points="5.5,15 9.00,12.40 9.00,17.60" fill="#b4b4ac"/><circle cx="17.5" cy="15" r="2.6" fill="#a0a098"/><text x="4" y="10" font-family="Liberation Serif" font-size="8" fill="#8a8a84">-V</text></svg>
<div style="left:258px;top:30px;width:22px;height:21px;overflow:hidden"><div class="bd" style="left:0;top:0;width:25px;height:21px"></div><svg style="left:0px;top:0px" width="25" height="21" viewBox="0 0 25 21" ><line x1="19" y1="5.5" x2="9.50" y2="5.50" stroke="#b4b4ac" stroke-width="2.2"/><polygon points="6,5.5 9.50,2.90 9.50,8.10" fill="#b4b4ac"/><line x1="19" y1="5.5" x2="19.00" y2="14.50" stroke="#b4b4ac" stroke-width="2.2"/><polygon points="19,18 16.40,14.50 21.60,14.50" fill="#b4b4ac"/><circle cx="19" cy="5.5" r="2.6" fill="#a0a098"/><text x="4" y="16" font-family="Liberation Serif" font-size="8" fill="#8a8a84">-W</text></svg></div>
<div class="t udv" style="left:8px;top:65px;font-weight:bold;font-size:11px;letter-spacing:-0.280px">User-defined views:</div>
<div style="left:5px;top:84px;width:275px;height:258px;background:#fbfbf4;border:1px solid #828790;border-top:1px solid #8c8ce8"></div>
<div class="b" style="left:8px;top:344px;width:25px;height:21px;"></div><svg style="left:8px;top:344px" width="25" height="21" viewBox="0 0 25 21" ><polygon points="10.10,6.00 7.39,6.89 6.50,9.60 5.61,6.89 2.90,6.00 5.61,5.11 6.50,2.40 7.39,5.11" fill="#f4e800" stroke="#b8a800" stroke-width=".3"/><polygon points="8.66,8.16 6.50,7.08 4.34,8.16 5.42,6.00 4.34,3.84 6.50,4.92 8.66,3.84 7.58,6.00" fill="#f4e800"/><g opacity="1"><path d="M8.9 13.5 Q14 8.825 19.1 13.5 Q14 18.175 8.9 13.5Z" fill="#fff" stroke="#1c2a9c" stroke-width="1.2"/><circle cx="14" cy="13.5" r="2.21" fill="#1c2a9c"/></g></svg>
<div class="bd" style="left:42px;top:344px;width:25px;height:21px;"></div><svg style="left:42px;top:344px" width="25" height="21" viewBox="0 0 25 21" ><rect x="4" y="3" width="9" height="2" fill="#a8a8a0"/><rect x="4" y="7" width="9" height="2" fill="#a8a8a0"/><g opacity="0.8"><path d="M9.9 13.5 Q15 8.825 20.1 13.5 Q15 18.175 9.9 13.5Z" fill="#fff" stroke="#8c8c86" stroke-width="1.2"/><circle cx="15" cy="13.5" r="2.21" fill="#8c8c86"/></g></svg>
<div class="bd" style="left:72px;top:344px;width:25px;height:21px;"></div><svg style="left:72px;top:344px" width="25" height="21" viewBox="0 0 25 21" ><path d="M6 8 A5 5 0 1 1 14 10" stroke="#a0a098" stroke-width="2.4" fill="none"/><g opacity="0.8"><path d="M9.4 13.5 Q14.5 8.825 19.6 13.5 Q14.5 18.175 9.4 13.5Z" fill="#fff" stroke="#8c8c86" stroke-width="1.2"/><circle cx="14.5" cy="13.5" r="2.21" fill="#8c8c86"/></g></svg>
<div class="bd" style="left:222px;top:344px;width:25px;height:21px;"></div><svg style="left:222px;top:344px" width="25" height="21" viewBox="0 0 25 21" ><path d="M5 3 L12 10 M12 3 L5 10" stroke="#8c8c86" stroke-width="1.8"/><g opacity="0.8"><path d="M10.2 13 Q15 8.6 19.8 13 Q15 17.4 10.2 13Z" fill="#fff" stroke="#8c8c86" stroke-width="1.2"/><circle cx="15" cy="13" r="2.08" fill="#8c8c86"/></g></svg>
<div class="bd" style="left:251px;top:344px;width:25px;height:21px;"></div><svg style="left:251px;top:344px" width="25" height="21" viewBox="0 0 25 21" ><path d="M7 3 Q12 10 18 17 M18 3 Q12 10 7 17" stroke="#8c8c86" stroke-width="2" fill="none"/></svg>
<div style="left:5px;top:369px;width:275px;height:1px;background:#9c9cf0"></div>
<div style="left:5px;top:370px;width:275px;height:6px;background:#fbfbf4"></div>
<div style="left:5px;top:375px;width:275px;height:1px;background:#a0a0a4"></div>
<div style="left:5px;top:376px;width:275px;height:16px;background:#dbe5fb"></div>
<div class="t vis" style="left:7px;top:377px;color:#1c1c8c;letter-spacing:-0.149px">Visibilities</div>
<div class="b" style="left:9px;top:397px;width:25px;height:21px;"></div><svg style="left:9px;top:397px" width="25" height="21" viewBox="0 0 25 21" ><rect x="4.5" y="2.5" width="7.5" height="6.5" fill="#f8f060" stroke="#222"/><g transform="translate(3,0.6)"><g opacity="1" stroke-linecap="butt" fill="none"><ellipse cx="9.8" cy="16.1" rx="6.3" ry="1.4" fill="#5c5c5c" stroke="none"/><path d="M6 15.4 h7.6" stroke="#1a1a1a" stroke-width="1"/><path d="M11.8 8.6 C14.8 9.8 15.2 13 13.8 15.4" stroke="#5c5c5c" stroke-width="2.1"/><path d="M14.4 1.8 L7.0 10.2" stroke="#1a1a1a" stroke-width="2.9"/><path d="M14.7 3.1 L8.3 10.3" stroke="#f0f0f0" stroke-width="0.8" opacity=".9"/><path d="M13.0 0.9 L16.0 3.5" stroke="#1a1a1a" stroke-width="1.3"/></g></g></svg>
<div class="b" style="left:39px;top:397px;width:25px;height:21px;"></div><svg style="left:39px;top:397px" width="25" height="21" viewBox="0 0 25 21" ><rect x="4.5" y="2.5" width="7" height="6" fill="#f8f060" stroke="#222"/><g transform="translate(3,0.6)"><g opacity="1" stroke-linecap="butt" fill="none"><ellipse cx="9.8" cy="16.1" rx="6.3" ry="1.4" fill="#5c5c5c" stroke="none"/><path d="M6 15.4 h7.6" stroke="#1a1a1a" stroke-width="1"/><path d="M11.8 8.6 C14.8 9.8 15.2 13 13.8 15.4" stroke="#5c5c5c" stroke-width="2.1"/><path d="M14.4 1.8 L7.0 10.2" stroke="#1a1a1a" stroke-width="2.9"/><path d="M14.7 3.1 L8.3 10.3" stroke="#f0f0f0" stroke-width="0.8" opacity=".9"/><path d="M13.0 0.9 L16.0 3.5" stroke="#1a1a1a" stroke-width="1.3"/></g></g><path d="M5 6 L11 12 M11 6 L5 12" stroke="#e81010" stroke-width="2"/></svg>
<div class="b" style="left:69px;top:397px;width:25px;height:21px;"></div><svg style="left:69px;top:397px" width="25" height="21" viewBox="0 0 25 21" ><rect x="5.5" y="3.5" width="6" height="5" fill="#f4f4f4" stroke="#666"/><path d="M4 2 h3 M5.5 .5 v3 M10 7.5 h3 M11.5 6 v3" stroke="#e01010" stroke-width="1"/><g transform="translate(3,0.6)"><g opacity="1" stroke-linecap="butt" fill="none"><ellipse cx="9.8" cy="16.1" rx="6.3" ry="1.4" fill="#5c5c5c" stroke="none"/><path d="M6 15.4 h7.6" stroke="#1a1a1a" stroke-width="1"/><path d="M11.8 8.6 C14.8 9.8 15.2 13 13.8 15.4" stroke="#5c5c5c" stroke-width="2.1"/><path d="M14.4 1.8 L7.0 10.2" stroke="#1a1a1a" stroke-width="2.9"/><path d="M14.7 3.1 L8.3 10.3" stroke="#f0f0f0" stroke-width="0.8" opacity=".9"/><path d="M13.0 0.9 L16.0 3.5" stroke="#1a1a1a" stroke-width="1.3"/></g></g></svg>
<div class="b" style="left:99px;top:397px;width:25px;height:21px;"></div><svg style="left:99px;top:397px" width="25" height="21" viewBox="0 0 25 21" ><rect x="4.5" y="2.5" width="8" height="6" fill="#a8d0f4" stroke="#1a3a8c"/><text x="5.2" y="8" font-size="5.5" fill="#102060" font-family="Liberation Sans">12</text><g transform="translate(3,0.6)"><g opacity="1" stroke-linecap="butt" fill="none"><ellipse cx="9.8" cy="16.1" rx="6.3" ry="1.4" fill="#5c5c5c" stroke="none"/><path d="M6 15.4 h7.6" stroke="#1a1a1a" stroke-width="1"/><path d="M11.8 8.6 C14.8 9.8 15.2 13 13.8 15.4" stroke="#5c5c5c" stroke-width="2.1"/><path d="M14.4 1.8 L7.0 10.2" stroke="#1a1a1a" stroke-width="2.9"/><path d="M14.7 3.1 L8.3 10.3" stroke="#f0f0f0" stroke-width="0.8" opacity=".9"/><path d="M13.0 0.9 L16.0 3.5" stroke="#1a1a1a" stroke-width="1.3"/></g></g></svg>
<div class="b" style="left:134px;top:397px;width:25px;height:21px;"></div><svg style="left:134px;top:397px" width="25" height="21" viewBox="0 0 25 21" ><path d="M5 9 A5 5 0 0 1 12 3.5" stroke="#3a5cc0" stroke-width="2" fill="none"/><path d="M3 8 L7 8 L5 11.5Z" fill="#3a5cc0"/><g transform="translate(3,0.6)"><g opacity="1" stroke-linecap="butt" fill="none"><ellipse cx="9.8" cy="16.1" rx="6.3" ry="1.4" fill="#5c5c5c" stroke="none"/><path d="M6 15.4 h7.6" stroke="#1a1a1a" stroke-width="1"/><path d="M11.8 8.6 C14.8 9.8 15.2 13 13.8 15.4" stroke="#5c5c5c" stroke-width="2.1"/><path d="M14.4 1.8 L7.0 10.2" stroke="#1a1a1a" stroke-width="2.9"/><path d="M14.7 3.1 L8.3 10.3" stroke="#f0f0f0" stroke-width="0.8" opacity=".9"/><path d="M13.0 0.9 L16.0 3.5" stroke="#1a1a1a" stroke-width="1.3"/></g></g></svg>
<div class="bd" style="left:164px;top:397px;width:25px;height:21px;"></div><svg style="left:164px;top:397px" width="25" height="21" viewBox="0 0 25 21" ><path d="M4 4 L11 4 L11 9 L7.5 12 L4 9Z" fill="#e4e4dc" stroke="#a0a098"/><g transform="translate(3,0.6)"><g opacity="1" stroke-linecap="butt" fill="none"><ellipse cx="9.8" cy="16.1" rx="6.3" ry="1.4" fill="#a4a49c" stroke="none"/><path d="M6 15.4 h7.6" stroke="#a4a49c" stroke-width="1"/><path d="M11.8 8.6 C14.8 9.8 15.2 13 13.8 15.4" stroke="#a4a49c" stroke-width="2.1"/><path d="M14.4 1.8 L7.0 10.2" stroke="#a4a49c" stroke-width="2.9"/><path d="M14.7 3.1 L8.3 10.3" stroke="#f0f0f0" stroke-width="0.8" opacity=".9"/><path d="M13.0 0.9 L16.0 3.5" stroke="#a4a49c" stroke-width="1.3"/></g></g></svg>
<div class="bd" style="left:198px;top:397px;width:25px;height:21px;"></div><svg style="left:198px;top:397px" width="25" height="21" viewBox="0 0 25 21" ><path d="M5 3 L10 8 M10 3 L5 8" stroke="#a0a098" stroke-width="1.2"/><g transform="translate(3,0.6)"><g opacity="1" stroke-linecap="butt" fill="none"><ellipse cx="9.8" cy="16.1" rx="6.3" ry="1.4" fill="#a4a49c" stroke="none"/><path d="M6 15.4 h7.6" stroke="#a4a49c" stroke-width="1"/><path d="M11.8 8.6 C14.8 9.8 15.2 13 13.8 15.4" stroke="#a4a49c" stroke-width="2.1"/><path d="M14.4 1.8 L7.0 10.2" stroke="#a4a49c" stroke-width="2.9"/><path d="M14.7 3.1 L8.3 10.3" stroke="#f0f0f0" stroke-width="0.8" opacity=".9"/><path d="M13.0 0.9 L16.0 3.5" stroke="#a4a49c" stroke-width="1.3"/></g></g></svg>
<div class="cb" style="left:8px;top:431px;width:13px;height:13px"></div>
<div class="t udg" style="left:24px;top:431px;;letter-spacing:-0.150px">User-defined / generated:</div>
<div style="left:5px;top:450px;width:275px;height:362px;background:#fbfbf4;border:1px solid #828790"></div>
<div style="left:24px;top:461px;width:6px;height:1px;background:repeating-linear-gradient(90deg,#808080 0 1px,transparent 1px 2px)"></div>
<div style="left:14px;top:457px;width:9px;height:9px;border:1px solid #919191;border-radius:1px;background:linear-gradient(#fff,#d8d8d8)"></div><div style="left:16px;top:461px;width:5px;height:1px;background:#2a3c9c"></div>
<div class="tcb" style="left:31px;top:454px;width:13px;height:13px"></div><div style="left:34px;top:457px;width:7px;height:7px;background:#8c8c8c"></div>
<svg style="left:46px;top:453px" width="16" height="14" viewBox="0 0 16 14" ><path d="M2.8 3 L2.8 12.5 L15.3 12.5 L15 4.2 L8.5 4.2 L7.5 2.6 L3.4 2.6 Z" fill="#f0d858" stroke="#a88c14" stroke-width=".7"/><path d="M11.6 6 L15 4.6 L15.3 12.5 Z" fill="#5c4c0c" opacity=".85"/><path d="M0.5 6 L12 6 L15.3 12.6 L2.9 12.6 Z" fill="url(#fo)" stroke="#9c8210" stroke-width=".7"/></svg>
<div class="t tr" style="left:67px;top:453.7px;;letter-spacing:-0.374px">User-defined</div>
<div style="left:38px;top:477px;width:11px;height:1px;background:repeating-linear-gradient(90deg,#808080 0 1px,transparent 1px 2px)"></div>
<div class="tcb" style="left:50px;top:470px;width:13px;height:13px"></div>
<svg style="left:66px;top:469px" width="16" height="14" viewBox="0 0 16 14" ><path d="M1.5 2.6 L1.5 12.6 L14.5 12.6 L14.5 4.4 L7.2 4.4 L6.2 2.6 Z" fill="#e8c83c" stroke="#b09418" stroke-width=".8"/><rect x="2" y="5.2" width="12" height="7" fill="url(#fg)"/></svg>
<div class="t tr" style="left:86px;top:469.7px;;letter-spacing:-0.309px">Gruppe 1</div>
<div style="left:43px;top:493px;width:6px;height:1px;background:repeating-linear-gradient(90deg,#808080 0 1px,transparent 1px 2px)"></div>
<div style="left:33px;top:489px;width:9px;height:9px;border:1px solid #919191;border-radius:1px;background:linear-gradient(#fff,#d8d8d8)"></div><div style="left:35px;top:493px;width:5px;height:1px;background:#2a3c9c"></div>
<div class="tcb" style="left:50px;top:486px;width:13px;height:13px"></div>
<svg style="left:66px;top:485px" width="16" height="14" viewBox="0 0 16 14" ><path d="M2.8 3 L2.8 12.5 L15.3 12.5 L15 4.2 L8.5 4.2 L7.5 2.6 L3.4 2.6 Z" fill="#f0d858" stroke="#a88c14" stroke-width=".7"/><path d="M11.6 6 L15 4.6 L15.3 12.5 Z" fill="#5c4c0c" opacity=".85"/><path d="M0.5 6 L12 6 L15.3 12.6 L2.9 12.6 Z" fill="url(#fo)" stroke="#9c8210" stroke-width=".7"/></svg>
<div class="t tr" style="left:86px;top:485.7px;;letter-spacing:-0.266px">Modellkontrolle</div>
<div style="left:57px;top:509px;width:11px;height:1px;background:repeating-linear-gradient(90deg,#808080 0 1px,transparent 1px 2px)"></div>
<div class="tcb" style="left:69px;top:502px;width:13px;height:13px"></div>
<div style="left:84px;top:500px;width:17px;height:16px;background:#fff"></div>
<div style="left:89px;top:503px;width:11px;height:11px;background:#6a9cf8;border:1px solid #1a1a1a"></div>
<div class="t tr" style="left:105px;top:501.7px;;letter-spacing:-0.133px">Identische Knoten 3,15</div>
<div style="left:24px;top:525px;width:6px;height:1px;background:repeating-linear-gradient(90deg,#808080 0 1px,transparent 1px 2px)"></div>
<div style="left:14px;top:521px;width:9px;height:9px;border:1px solid #919191;border-radius:1px;background:linear-gradient(#fff,#d8d8d8)"></div><div style="left:16px;top:525px;width:5px;height:1px;background:#2a3c9c"></div>
<div class="tcb" style="left:31px;top:518px;width:13px;height:13px"></div><div style="left:34px;top:521px;width:7px;height:7px;background:#8c8c8c"></div>
<svg style="left:46px;top:517px" width="16" height="14" viewBox="0 0 16 14" ><path d="M2.8 3 L2.8 12.5 L15.3 12.5 L15 4.2 L8.5 4.2 L7.5 2.6 L3.4 2.6 Z" fill="#f0d858" stroke="#a88c14" stroke-width=".7"/><path d="M11.6 6 L15 4.6 L15.3 12.5 Z" fill="#5c4c0c" opacity=".85"/><path d="M0.5 6 L12 6 L15.3 12.6 L2.9 12.6 Z" fill="url(#fo)" stroke="#9c8210" stroke-width=".7"/></svg>
<div class="t tr" style="left:67px;top:517.7px;;letter-spacing:-0.332px">Generated</div>
<div style="left:43px;top:541px;width:6px;height:1px;background:repeating-linear-gradient(90deg,#808080 0 1px,transparent 1px 2px)"></div>
<div style="left:33px;top:537px;width:9px;height:9px;border:1px solid #919191;border-radius:1px;background:linear-gradient(#fff,#d8d8d8)"></div><div style="left:35px;top:541px;width:5px;height:1px;background:#2a3c9c"></div><div style="left:37px;top:539px;width:1px;height:5px;background:#2a3c9c"></div>
<div class="tcb" style="left:50px;top:534px;width:13px;height:13px"></div>
<svg style="left:66px;top:533px" width="16" height="14" viewBox="0 0 16 14" ><path d="M1.5 2.6 L1.5 12.6 L14.5 12.6 L14.5 4.4 L7.2 4.4 L6.2 2.6 Z" fill="#e8c83c" stroke="#b09418" stroke-width=".8"/><rect x="2" y="5.2" width="12" height="7" fill="url(#fg)"/></svg>
<div class="t tr" style="left:86px;top:533.7px;;letter-spacing:-0.230px">Lines by Type</div>
<div style="left:43px;top:557px;width:6px;height:1px;background:repeating-linear-gradient(90deg,#808080 0 1px,transparent 1px 2px)"></div>
<div style="left:33px;top:553px;width:9px;height:9px;border:1px solid #919191;border-radius:1px;background:linear-gradient(#fff,#d8d8d8)"></div><div style="left:35px;top:557px;width:5px;height:1px;background:#2a3c9c"></div><div style="left:37px;top:555px;width:1px;height:5px;background:#2a3c9c"></div>
<div class="tcb" style="left:50px;top:550px;width:13px;height:13px"></div>
<svg style="left:66px;top:549px" width="16" height="14" viewBox="0 0 16 14" ><path d="M1.5 2.6 L1.5 12.6 L14.5 12.6 L14.5 4.4 L7.2 4.4 L6.2 2.6 Z" fill="#e8c83c" stroke="#b09418" stroke-width=".8"/><rect x="2" y="5.2" width="12" height="7" fill="url(#fg)"/></svg>
<div class="t tr" style="left:86px;top:549.7px;;letter-spacing:-0.377px">Members by Cross-Section</div>
<div style="left:43px;top:573px;width:6px;height:1px;background:repeating-linear-gradient(90deg,#808080 0 1px,transparent 1px 2px)"></div>
<div style="left:33px;top:569px;width:9px;height:9px;border:1px solid #919191;border-radius:1px;background:linear-gradient(#fff,#d8d8d8)"></div><div style="left:35px;top:573px;width:5px;height:1px;background:#2a3c9c"></div><div style="left:37px;top:571px;width:1px;height:5px;background:#2a3c9c"></div>
<div class="tcb" style="left:50px;top:566px;width:13px;height:13px"></div>
<svg style="left:66px;top:565px" width="16" height="14" viewBox="0 0 16 14" ><path d="M1.5 2.6 L1.5 12.6 L14.5 12.6 L14.5 4.4 L7.2 4.4 L6.2 2.6 Z" fill="#e8c83c" stroke="#b09418" stroke-width=".8"/><rect x="2" y="5.2" width="12" height="7" fill="url(#fg)"/></svg>
<div class="t tr" style="left:86px;top:565.7px;;letter-spacing:-0.257px">Members by Eccentricity</div>
<div style="left:43px;top:589px;width:6px;height:1px;background:repeating-linear-gradient(90deg,#808080 0 1px,transparent 1px 2px)"></div>
<div style="left:33px;top:585px;width:9px;height:9px;border:1px solid #919191;border-radius:1px;background:linear-gradient(#fff,#d8d8d8)"></div><div style="left:35px;top:589px;width:5px;height:1px;background:#2a3c9c"></div><div style="left:37px;top:587px;width:1px;height:5px;background:#2a3c9c"></div>
<div class="tcb" style="left:50px;top:582px;width:13px;height:13px"></div>
<svg style="left:66px;top:581px" width="16" height="14" viewBox="0 0 16 14" ><path d="M1.5 2.6 L1.5 12.6 L14.5 12.6 L14.5 4.4 L7.2 4.4 L6.2 2.6 Z" fill="#e8c83c" stroke="#b09418" stroke-width=".8"/><rect x="2" y="5.2" width="12" height="7" fill="url(#fg)"/></svg>
<div class="t tr" style="left:86px;top:581.7px;;letter-spacing:-0.353px">Members by Material</div>
<div style="left:43px;top:605px;width:6px;height:1px;background:repeating-linear-gradient(90deg,#808080 0 1px,transparent 1px 2px)"></div>
<div style="left:33px;top:601px;width:9px;height:9px;border:1px solid #919191;border-radius:1px;background:linear-gradient(#fff,#d8d8d8)"></div><div style="left:35px;top:605px;width:5px;height:1px;background:#2a3c9c"></div><div style="left:37px;top:603px;width:1px;height:5px;background:#2a3c9c"></div>
<div class="tcb" style="left:50px;top:598px;width:13px;height:13px"></div>
<svg style="left:66px;top:597px" width="16" height="14" viewBox="0 0 16 14" ><path d="M1.5 2.6 L1.5 12.6 L14.5 12.6 L14.5 4.4 L7.2 4.4 L6.2 2.6 Z" fill="#e8c83c" stroke="#b09418" stroke-width=".8"/><rect x="2" y="5.2" width="12" height="7" fill="url(#fg)"/></svg>
<div class="t tr" style="left:86px;top:597.7px;;letter-spacing:-0.341px">Members by Release</div>
<div style="left:43px;top:621px;width:6px;height:1px;background:repeating-linear-gradient(90deg,#808080 0 1px,transparent 1px 2px)"></div>
<div style="left:33px;top:617px;width:9px;height:9px;border:1px solid #919191;border-radius:1px;background:linear-gradient(#fff,#d8d8d8)"></div><div style="left:35px;top:621px;width:5px;height:1px;background:#2a3c9c"></div><div style="left:37px;top:619px;width:1px;height:5px;background:#2a3c9c"></div>
<div class="tcb" style="left:50px;top:614px;width:13px;height:13px"></div>
<svg style="left:66px;top:613px" width="16" height="14" viewBox="0 0 16 14" ><path d="M1.5 2.6 L1.5 12.6 L14.5 12.6 L14.5 4.4 L7.2 4.4 L6.2 2.6 Z" fill="#e8c83c" stroke="#b09418" stroke-width=".8"/><rect x="2" y="5.2" width="12" height="7" fill="url(#fg)"/></svg>
<div class="t tr" style="left:86px;top:613.7px;;letter-spacing:-0.302px">Members by Type</div>
<div style="left:43px;top:637px;width:6px;height:1px;background:repeating-linear-gradient(90deg,#808080 0 1px,transparent 1px 2px)"></div>
<div style="left:33px;top:633px;width:9px;height:9px;border:1px solid #919191;border-radius:1px;background:linear-gradient(#fff,#d8d8d8)"></div><div style="left:35px;top:637px;width:5px;height:1px;background:#2a3c9c"></div><div style="left:37px;top:635px;width:1px;height:5px;background:#2a3c9c"></div>
<div class="tcb" style="left:50px;top:630px;width:13px;height:13px"></div>
<svg style="left:66px;top:629px" width="16" height="14" viewBox="0 0 16 14" ><path d="M1.5 2.6 L1.5 12.6 L14.5 12.6 L14.5 4.4 L7.2 4.4 L6.2 2.6 Z" fill="#e8c83c" stroke="#b09418" stroke-width=".8"/><rect x="2" y="5.2" width="12" height="7" fill="url(#fg)"/></svg>
<div class="t tr" style="left:86px;top:629.7px;;letter-spacing:-0.239px">Nodes with Support</div>
<div style="left:43px;top:653px;width:6px;height:1px;background:repeating-linear-gradient(90deg,#808080 0 1px,transparent 1px 2px)"></div>
<div style="left:33px;top:649px;width:9px;height:9px;border:1px solid #919191;border-radius:1px;background:linear-gradient(#fff,#d8d8d8)"></div><div style="left:35px;top:653px;width:5px;height:1px;background:#2a3c9c"></div><div style="left:37px;top:651px;width:1px;height:5px;background:#2a3c9c"></div>
<div class="tcb" style="left:50px;top:646px;width:13px;height:13px"></div>
<svg style="left:66px;top:645px" width="16" height="14" viewBox="0 0 16 14" ><path d="M1.5 2.6 L1.5 12.6 L14.5 12.6 L14.5 4.4 L7.2 4.4 L6.2 2.6 Z" fill="#e8c83c" stroke="#b09418" stroke-width=".8"/><rect x="2" y="5.2" width="12" height="7" fill="url(#fg)"/></svg>
<div class="t tr" style="left:86px;top:645.7px;;letter-spacing:-0.182px">Surfaces by Eccentricity</div>
<div style="left:43px;top:669px;width:6px;height:1px;background:repeating-linear-gradient(90deg,#808080 0 1px,transparent 1px 2px)"></div>
<div style="left:33px;top:665px;width:9px;height:9px;border:1px solid #919191;border-radius:1px;background:linear-gradient(#fff,#d8d8d8)"></div><div style="left:35px;top:669px;width:5px;height:1px;background:#2a3c9c"></div><div style="left:37px;top:667px;width:1px;height:5px;background:#2a3c9c"></div>
<div class="tcb" style="left:50px;top:662px;width:13px;height:13px"></div>
<svg style="left:66px;top:661px" width="16" height="14" viewBox="0 0 16 14" ><path d="M1.5 2.6 L1.5 12.6 L14.5 12.6 L14.5 4.4 L7.2 4.4 L6.2 2.6 Z" fill="#e8c83c" stroke="#b09418" stroke-width=".8"/><rect x="2" y="5.2" width="12" height="7" fill="url(#fg)"/></svg>
<div class="t tr" style="left:86px;top:661.7px;;letter-spacing:-0.322px">Surfaces by Geometry</div>
<div style="left:43px;top:685px;width:6px;height:1px;background:repeating-linear-gradient(90deg,#808080 0 1px,transparent 1px 2px)"></div>
<div style="left:33px;top:681px;width:9px;height:9px;border:1px solid #919191;border-radius:1px;background:linear-gradient(#fff,#d8d8d8)"></div><div style="left:35px;top:685px;width:5px;height:1px;background:#2a3c9c"></div><div style="left:37px;top:683px;width:1px;height:5px;background:#2a3c9c"></div>
<div class="tcb" style="left:50px;top:678px;width:13px;height:13px"></div>
<svg style="left:66px;top:677px" width="16" height="14" viewBox="0 0 16 14" ><path d="M1.5 2.6 L1.5 12.6 L14.5 12.6 L14.5 4.4 L7.2 4.4 L6.2 2.6 Z" fill="#e8c83c" stroke="#b09418" stroke-width=".8"/><rect x="2" y="5.2" width="12" height="7" fill="url(#fg)"/></svg>
<div class="t tr" style="left:86px;top:677.7px;;letter-spacing:-0.273px">Surfaces by Material</div>
<div style="left:43px;top:701px;width:6px;height:1px;background:repeating-linear-gradient(90deg,#808080 0 1px,transparent 1px 2px)"></div>
<div style="left:33px;top:697px;width:9px;height:9px;border:1px solid #919191;border-radius:1px;background:linear-gradient(#fff,#d8d8d8)"></div><div style="left:35px;top:701px;width:5px;height:1px;background:#2a3c9c"></div><div style="left:37px;top:699px;width:1px;height:5px;background:#2a3c9c"></div>
<div class="tcb" style="left:50px;top:694px;width:13px;height:13px"></div>
<svg style="left:66px;top:693px" width="16" height="14" viewBox="0 0 16 14" ><path d="M1.5 2.6 L1.5 12.6 L14.5 12.6 L14.5 4.4 L7.2 4.4 L6.2 2.6 Z" fill="#e8c83c" stroke="#b09418" stroke-width=".8"/><rect x="2" y="5.2" width="12" height="7" fill="url(#fg)"/></svg>
<div class="t tr" style="left:86px;top:693.7px;;letter-spacing:-0.254px">Surfaces by Stiffness</div>
<div style="left:43px;top:717px;width:6px;height:1px;background:repeating-linear-gradient(90deg,#808080 0 1px,transparent 1px 2px)"></div>
<div style="left:33px;top:713px;width:9px;height:9px;border:1px solid #919191;border-radius:1px;background:linear-gradient(#fff,#d8d8d8)"></div><div style="left:35px;top:717px;width:5px;height:1px;background:#2a3c9c"></div><div style="left:37px;top:715px;width:1px;height:5px;background:#2a3c9c"></div>
<div class="tcb" style="left:50px;top:710px;width:13px;height:13px"></div>
<svg style="left:66px;top:709px" width="16" height="14" viewBox="0 0 16 14" ><path d="M1.5 2.6 L1.5 12.6 L14.5 12.6 L14.5 4.4 L7.2 4.4 L6.2 2.6 Z" fill="#e8c83c" stroke="#b09418" stroke-width=".8"/><rect x="2" y="5.2" width="12" height="7" fill="url(#fg)"/></svg>
<div class="t tr" style="left:86px;top:709.7px;;letter-spacing:-0.170px">Surfaces by Thickness</div>
<div style="left:18px;top:467px;width:1px;height:54px;background:repeating-linear-gradient(180deg,#808080 0 1px,transparent 1px 2px)"></div>
<div style="left:37px;top:467px;width:1px;height:22px;background:repeating-linear-gradient(180deg,#808080 0 1px,transparent 1px 2px)"></div>
<div style="left:56px;top:499px;width:1px;height:10px;background:repeating-linear-gradient(180deg,#808080 0 1px,transparent 1px 2px)"></div>
<div style="left:37px;top:531px;width:1px;height:182px;background:repeating-linear-gradient(180deg,#808080 0 1px,transparent 1px 2px)"></div>
<div class="b" style="left:9px;top:816px;width:25px;height:21px;"></div><svg style="left:9px;top:816px" width="25" height="21" viewBox="0 0 25 21" ><polygon points="10.80,6.00 7.94,6.94 7.00,9.80 6.06,6.94 3.20,6.00 6.06,5.06 7.00,2.20 7.94,5.06" fill="#f4e800" stroke="#b8a800" stroke-width=".3"/><polygon points="9.28,8.28 7.00,7.14 4.72,8.28 5.86,6.00 4.72,3.72 7.00,4.86 9.28,3.72 8.14,6.00" fill="#f4e800"/><g transform="translate(4,0.6)"><g opacity="1" stroke-linecap="butt" fill="none"><ellipse cx="9.8" cy="16.1" rx="6.3" ry="1.4" fill="#5c5c5c" stroke="none"/><path d="M6 15.4 h7.6" stroke="#1a1a1a" stroke-width="1"/><path d="M11.8 8.6 C14.8 9.8 15.2 13 13.8 15.4" stroke="#5c5c5c" stroke-width="2.1"/><path d="M14.4 1.8 L7.0 10.2" stroke="#1a1a1a" stroke-width="2.9"/><path d="M14.7 3.1 L8.3 10.3" stroke="#f0f0f0" stroke-width="0.8" opacity=".9"/><path d="M13.0 0.9 L16.0 3.5" stroke="#1a1a1a" stroke-width="1.3"/></g></g></svg>
<div class="bd" style="left:44px;top:816px;width:25px;height:21px;"></div><svg style="left:44px;top:816px" width="25" height="21" viewBox="0 0 25 21" ><path d="M5 6 h7 M8.5 2.5 v7" stroke="#a4a49c" stroke-width="2"/><g transform="translate(3,0.6)"><g opacity="1" stroke-linecap="butt" fill="none"><ellipse cx="9.8" cy="16.1" rx="6.3" ry="1.4" fill="#a4a49c" stroke="none"/><path d="M6 15.4 h7.6" stroke="#a4a49c" stroke-width="1"/><path d="M11.8 8.6 C14.8 9.8 15.2 13 13.8 15.4" stroke="#a4a49c" stroke-width="2.1"/><path d="M14.4 1.8 L7.0 10.2" stroke="#a4a49c" stroke-width="2.9"/><path d="M14.7 3.1 L8.3 10.3" stroke="#f0f0f0" stroke-width="0.8" opacity=".9"/><path d="M13.0 0.9 L16.0 3.5" stroke="#a4a49c" stroke-width="1.3"/></g></g></svg>
<div class="bd" style="left:74px;top:816px;width:25px;height:21px;"></div><svg style="left:74px;top:816px" width="25" height="21" viewBox="0 0 25 21" ><path d="M4 6 h8" stroke="#a4a49c" stroke-width="2"/><g transform="translate(3,0.6)"><g opacity="1" stroke-linecap="butt" fill="none"><ellipse cx="9.8" cy="16.1" rx="6.3" ry="1.4" fill="#a4a49c" stroke="none"/><path d="M6 15.4 h7.6" stroke="#a4a49c" stroke-width="1"/><path d="M11.8 8.6 C14.8 9.8 15.2 13 13.8 15.4" stroke="#a4a49c" stroke-width="2.1"/><path d="M14.4 1.8 L7.0 10.2" stroke="#a4a49c" stroke-width="2.9"/><path d="M14.7 3.1 L8.3 10.3" stroke="#f0f0f0" stroke-width="0.8" opacity=".9"/><path d="M13.0 0.9 L16.0 3.5" stroke="#a4a49c" stroke-width="1.3"/></g></g></svg>
<div class="bd" style="left:104px;top:816px;width:25px;height:21px;"></div><svg style="left:104px;top:816px" width="25" height="21" viewBox="0 0 25 21" ><path d="M4 4 h9 M4 8 h7" stroke="#a4a49c" stroke-width="2"/><g transform="translate(3,0.6)"><g opacity="1" stroke-linecap="butt" fill="none"><ellipse cx="9.8" cy="16.1" rx="6.3" ry="1.4" fill="#a4a49c" stroke="none"/><path d="M6 15.4 h7.6" stroke="#a4a49c" stroke-width="1"/><path d="M11.8 8.6 C14.8 9.8 15.2 13 13.8 15.4" stroke="#a4a49c" stroke-width="2.1"/><path d="M14.4 1.8 L7.0 10.2" stroke="#a4a49c" stroke-width="2.9"/><path d="M14.7 3.1 L8.3 10.3" stroke="#f0f0f0" stroke-width="0.8" opacity=".9"/><path d="M13.0 0.9 L16.0 3.5" stroke="#a4a49c" stroke-width="1.3"/></g></g></svg>
<div class="bd" style="left:138px;top:816px;width:25px;height:21px;"></div><svg style="left:138px;top:816px" width="25" height="21" viewBox="0 0 25 21" ><path d="M4 4 L11 4 L11 9 L7.5 12 L4 9Z" fill="#e4e4dc" stroke="#a0a098"/><g transform="translate(3,0.6)"><g opacity="1" stroke-linecap="butt" fill="none"><ellipse cx="9.8" cy="16.1" rx="6.3" ry="1.4" fill="#a4a49c" stroke="none"/><path d="M6 15.4 h7.6" stroke="#a4a49c" stroke-width="1"/><path d="M11.8 8.6 C14.8 9.8 15.2 13 13.8 15.4" stroke="#a4a49c" stroke-width="2.1"/><path d="M14.4 1.8 L7.0 10.2" stroke="#a4a49c" stroke-width="2.9"/><path d="M14.7 3.1 L8.3 10.3" stroke="#f0f0f0" stroke-width="0.8" opacity=".9"/><path d="M13.0 0.9 L16.0 3.5" stroke="#a4a49c" stroke-width="1.3"/></g></g></svg>
<div class="bd" style="left:173px;top:816px;width:25px;height:21px;"></div><svg style="left:173px;top:816px" width="25" height="21" viewBox="0 0 25 21" ><rect x="4.5" y="6.5" width="10" height="10" fill="#dcdcd4" stroke="#8c8c84"/><rect x="8.5" y="2.5" width="9" height="9" fill="none" stroke="#8c8c84"/><rect x="11.5" y="8.5" width="8" height="7" fill="none" stroke="#8c8c84"/></svg>
<div style="left:203px;top:816px;width:25px;height:21px;border:1px solid #2c628b;border-radius:3px;background:linear-gradient(#daecfa 0%,#c4e0f6 48%,#98d1ef 52%,#68b3db 100%);box-shadow:inset 0 0 0 1px rgba(255,255,255,.5)"></div>
<svg style="left:203px;top:816px" width="25" height="21" viewBox="0 0 25 21" ><rect x="4.5" y="6.5" width="10" height="10" fill="none" stroke="#8c8c84"/><rect x="8.5" y="2.5" width="9" height="9" fill="none" stroke="#8c8c84"/><rect x="11.5" y="8.5" width="8" height="7" fill="none" stroke="#8c8c84"/></svg>
<div class="bd" style="left:233px;top:816px;width:25px;height:21px;"></div><svg style="left:233px;top:816px" width="25" height="21" viewBox="0 0 25 21" ><rect x="4.5" y="6.5" width="10" height="10" fill="#dcdcd4" stroke="#8c8c84"/><rect x="8.5" y="2.5" width="9" height="9" fill="none" stroke="#8c8c84"/><rect x="11.5" y="8.5" width="8" height="7" fill="none" stroke="#8c8c84"/></svg>
<div class="cb" style="left:8px;top:850px;width:13px;height:13px"></div>
<div class="t ano" style="left:24px;top:850px;;letter-spacing:-0.204px">Add new objects into visibility:</div>
<div style="left:8px;top:868px;width:251px;height:21px;border:1px solid #b4b6ba;border-radius:3px;background:#f4f4f4"></div>
<svg style="left:246px;top:877px" width="8" height="5" viewBox="0 0 8 5" ><path d="M0 0 L8 0 L4 4.5Z" fill="#9a9a9a"/></svg>
<div style="left:0px;top:898px;width:289px;height:22px;background:#cdd2dd"></div>
<div style="left:0px;top:898px;width:284px;height:1px;background:#80848e"></div>
<div style="left:0px;top:920px;width:289px;height:3px;background:#b0b6c5"></div>
<div style="left:122px;top:899px;width:55px;height:19px;background:linear-gradient(#f6f9fc,#e4eaf3);border:1px solid #c4ecf0;border-top:none;border-radius:0 0 4px 4px"></div>
<svg style="left:5px;top:900px" width="18" height="17" viewBox="0 0 18 17" ><rect x="5" y="1" width="11" height="9" fill="#fff" stroke="#3a6ad0"/><rect x="5" y="1" width="11" height="2.5" fill="#3a6ad0"/><path d="M1 5 h5 l1 1.5 h3 v7 h-9z" fill="#f0c828" stroke="#a88a10" stroke-width=".6"/><circle cx="10" cy="9.5" r="3.2" fill="#e8f2fc" stroke="#2a3a7c" stroke-width="1.4"/><path d="M12.4 12 L15.5 15.4" stroke="#b07828" stroke-width="2.2"/></svg>
<div class="t tab" style="left:25px;top:903px;font-size:12px;color:#4a4a4a;letter-spacing:-0.665px">Data</div>
<svg style="left:58px;top:900px" width="18" height="17" viewBox="0 0 18 17" ><rect x="2.5" y="4.5" width="11" height="11" fill="#fff" stroke="#1a1a1a"/><path d="M4.5 8 h7 M4.5 10.5 h7 M4.5 13 h7" stroke="#2a4ac8" stroke-width="1.4"/><path d="M6 4 Q9 0 14 1 L16 4 L10 6Z" fill="#8a7868" stroke="#3a3028" stroke-width=".6"/></svg>
<div class="t tab" style="left:78px;top:903px;font-size:12px;color:#4a4a4a;letter-spacing:-0.451px">Display</div>
<svg style="left:126px;top:900px" width="18" height="17" viewBox="0 0 18 17" ><g transform="translate(-1,0)"><g opacity="1" stroke-linecap="butt" fill="none"><ellipse cx="9.8" cy="16.1" rx="6.3" ry="1.4" fill="#4a68c8" stroke="none"/><path d="M6 15.4 h7.6" stroke="#4a68c8" stroke-width="1"/><path d="M11.8 8.6 C14.8 9.8 15.2 13 13.8 15.4" stroke="#4a68c8" stroke-width="2.1"/><path d="M14.4 1.8 L7.0 10.2" stroke="#4a68c8" stroke-width="2.9"/><path d="M14.7 3.1 L8.3 10.3" stroke="#f0f0f0" stroke-width="0.8" opacity=".9"/><path d="M13.0 0.9 L16.0 3.5" stroke="#4a68c8" stroke-width="1.3"/></g></g></svg>
<div class="t tab" style="left:144px;top:903px;font-size:12px;color:#4a4a4a;letter-spacing:-0.539px">Views</div>
<div style="left:374px;top:24px;width:420px;height:422px;border-radius:8px;background:#000"></div>
<div style="left:375px;top:25px;width:418px;height:420px;border-radius:6px;background:#0c0e10"></div>
<div style="left:375px;top:25px;width:418px;height:27px;border-radius:6px 6px 0 0;background:linear-gradient(135deg,#dde3e8 0%,#d5dce2 17%,#aab6c0 23%,#74828e 30%,#3a4248 38%,#0e1012 46%,#0e1012 64%,#34383c 74%,#565a5e 83%,#5e6266 100%)"></div>
<div style="left:375px;top:52px;width:6px;height:387px;background:linear-gradient(90deg,rgba(0,0,0,.12) 0,rgba(0,0,0,0) 2px,rgba(255,255,255,.28) 6px),linear-gradient(180deg,#dfe3e6 0.3%,#c2c6ca 24.5%,#5a6670 24.8%,#0c0e10 29.2%,#0c0e10 51.2%,#6a7a8a 55.8%,#7a90a8 64.1%,#7a96b4 99.7%)"></div>
<div style="left:788px;top:52px;width:5px;height:387px;background:linear-gradient(180deg,#585c60 0.3%,#585c60 4.1%,#b08890 5.9%,#c0ccd8 7.8%,#b8c6d4 24.0%,#6a849c 25.8%,#6e8aa4 42.1%,#8a9aac 48.6%,#8494ac 58.9%,#6670c8 61.5%,#6670c8 70.5%,#90a0b0 73.9%,#8898a8 79.6%,#208040 81.7%,#185030 86.0%,#080a08 89.9%,#101010 99.7%)"></div>
<div style="left:375px;top:439px;width:418px;height:6px;border-radius:0 0 6px 6px;background:linear-gradient(180deg,rgba(255,255,255,0) 0,rgba(255,255,255,0) 4px,rgba(200,210,222,.55) 5px,rgba(200,210,222,.55) 6px),linear-gradient(90deg,#7a94b0 0.0%,#6a86a4 7.9%,#101418 10.3%,#000 33.5%,#4a6a90 35.2%,#6a8ab0 39.5%,#101418 43.3%,#000 51.4%,#5a7aa0 52.9%,#4a6a90 56.2%,#000 57.7%,#000 80.1%,#5a7aa0 81.6%,#6a8ab0 87.3%,#4a6a90 91.1%,#000 92.6%,#181a1c 100.0%)"></div>
<div style="left:375px;top:25px;width:418px;height:420px;border-radius:6px;border:1px solid rgba(200,210,222,.45)"></div>
<div class="t dt" style="left:382px;top:31.8px;font-size:12px;color:#000;text-shadow:0 0 6px #fff,0 0 10px #fff,0 0 3px #fff;letter-spacing:0.052px">Identical Nodes</div>
<div style="left:738px;top:25px;width:54px;height:23px;overflow:hidden"><div style="left:3px;top:-1px;width:47px;height:20px;border:1px solid #4a1810;border-radius:0 0 4px 4px;background:linear-gradient(#e8a898 0%,#d88070 44%,#c23418 50%,#c03c1c 72%,#d8684c 100%);box-shadow:0 0 0 1px rgba(255,255,255,.8),inset 0 0 0 1px rgba(255,255,255,.32)"></div></div>
<svg style="left:758.5px;top:28px" width="14" height="12" viewBox="0 0 14 12" ><path d="M3 2 L11 10 M11 2 L3 10" stroke="#3a4258" stroke-width="4"/><path d="M3 2 L11 10 M11 2 L3 10" stroke="#fff" stroke-width="2.4"/></svg>
<div style="left:381px;top:52px;width:407px;height:387px;background:#f0f0f0;border:1px solid #5a5e62;border-right-color:#3a3c3e;border-bottom-color:#222"></div>
<div style="left:382px;top:53px;width:405px;height:1px;background:#fff"></div>
<div style="left:390px;top:77px;width:390px;height:151px;background:#f0f4fa;border:1px solid #a8a8f0;border-top:none;border-left:1px solid #c8c8f4"></div><div style="left:390px;top:62px;width:390px;height:16px;background:#dce6f6;clip-path:polygon(0 0,379px 0,100% 11px,100% 100%,0 100%)"></div><div class="t g1" style="left:392px;top:63px;color:#1e3a5e;letter-spacing:-0.096px">Groups of Identical Nodes</div>
<div style="left:390px;top:78px;width:389px;height:120px;background:#fff;border-top:1px solid #828790;border-left:1px solid #828790"></div>
<div style="left:391px;top:79px;width:368px;height:19px;background:#3399ff"></div>
<div class="t li" style="left:395px;top:81.6px;color:#fff;letter-spacing:-0.080px">3,15</div>
<div style="left:761px;top:79px;width:18px;height:119px;background:#f0f0f0"></div>
<svg style="left:766px;top:85px" width="8" height="5" viewBox="0 0 8 5" ><path d="M0 4.5 L4 0 L8 4.5Z" fill="#444"/></svg>
<svg style="left:766px;top:187px" width="8" height="5" viewBox="0 0 8 5" ><path d="M0 0 L8 0 L4 4.5Z" fill="#444"/></svg>
<div style="left:762px;top:97px;width:16px;height:82px;border:1px solid #979797;border-radius:2px;background:linear-gradient(90deg,#f4f4f4 0%,#eaeaea 45%,#d8d8d8 55%,#d0d0d0 100%)"></div>
<div style="left:766px;top:134px;width:8px;height:1px;background:#6a6a6a"></div>
<div style="left:766px;top:136px;width:8px;height:1px;background:#6a6a6a"></div>
<div style="left:766px;top:138px;width:8px;height:1px;background:#6a6a6a"></div>
<div style="left:766px;top:140px;width:8px;height:1px;background:#6a6a6a"></div>
<div class="t ng" style="left:393px;top:207px;;letter-spacing:-0.271px">Number of groups:</div>
<div style="left:508px;top:205px;width:29px;height:18px;background:#ececec;border:1px solid #7a7a7a;border-right-color:#fff;border-bottom-color:#fff"></div>
<div class="t" style="left:508px;top:206px;width:25px;text-align:right">1</div>
<div style="left:390px;top:253px;width:225px;height:136px;background:#f0f4fa;border:1px solid #a8a8f0;border-top:none;border-left:1px solid #c8c8f4"></div><div style="left:390px;top:238px;width:225px;height:16px;background:#dce6f6;clip-path:polygon(0 0,214px 0,100% 11px,100% 100%,0 100%)"></div><div class="t g2" style="left:392px;top:239px;color:#1e3a5e;letter-spacing:-0.045px">What is to happen with</div>
<div class="t q" style="left:393px;top:260px;;letter-spacing:-0.189px">Identical nodes?</div>
<div style="left:393px;top:279px;width:12px;height:12px;border-radius:50%;border:1px solid #8e8f8f;background:radial-gradient(circle at 40% 35%,#fdfdfd 0,#e4e4e4 60%,#d0d0d0 100%)"></div><div style="left:396px;top:282px;width:6px;height:6px;border-radius:50%;background:radial-gradient(circle at 35% 30%,#6ac8f0,#1a4a8c 75%)"></div>
<div class="t r1" style="left:409px;top:278px;;letter-spacing:-0.275px">Nothing</div>
<div style="left:393px;top:298px;width:12px;height:12px;border-radius:50%;border:1px solid #8e8f8f;background:radial-gradient(circle at 40% 35%,#fdfdfd 0,#e4e4e4 60%,#d0d0d0 100%)"></div>
<div class="t r2" style="left:409px;top:297px;;letter-spacing:-0.209px">Delete unused nodes</div>
<div style="left:393px;top:318px;width:12px;height:12px;border-radius:50%;border:1px solid #8e8f8f;background:radial-gradient(circle at 40% 35%,#fdfdfd 0,#e4e4e4 60%,#d0d0d0 100%)"></div>
<div class="t r3" style="left:409px;top:316px;;letter-spacing:-0.146px">Unite nodes/supports and delete unused</div>
<div class="t" style="left:409px;top:329px;;letter-spacing:-0.297px">nodes</div>
<div style="left:393px;top:348px;width:216px;height:1px;background:#8a8a8a"></div>
<div style="left:393px;top:357px;width:12px;height:12px;border-radius:50%;border:1px solid #8e8f8f;background:radial-gradient(circle at 40% 35%,#fdfdfd 0,#e4e4e4 60%,#d0d0d0 100%)"></div>
<div class="t r4" style="left:408px;top:355px;;letter-spacing:-0.118px">Check again with other</div>
<div class="t" style="left:408px;top:368px;;letter-spacing:-0.152px">tolerance</div>
<div class="bd" style="left:571px;top:357px;width:25px;height:21px"></div>
<svg style="left:571px;top:357px" width="25" height="21" viewBox="0 0 25 21" ><path d="M6 11 L10.5 16 L19 4" stroke="#b4b4ac" stroke-width="2.6" fill="none"/></svg>
<div style="left:622px;top:253px;width:158px;height:81px;background:#f0f4fa;border:1px solid #a8a8f0;border-top:none;border-left:1px solid #c8c8f4"></div><div style="left:622px;top:238px;width:158px;height:16px;background:#dce6f6;clip-path:polygon(0 0,147px 0,100% 11px,100% 100%,0 100%)"></div><div class="t g3" style="left:624px;top:239px;color:#1e3a5e;letter-spacing:-0.010px">Apply action to</div>
<div style="left:625px;top:262px;width:12px;height:12px;border-radius:50%;border:1px solid #b0b0b0;background:radial-gradient(circle at 40% 35%,#fdfdfd 0,#e4e4e4 60%,#d0d0d0 100%)"></div><div style="left:628px;top:265px;width:6px;height:6px;border-radius:50%;background:radial-gradient(circle at 40% 35%,#d8d8d8,#9a9a9a)"></div>
<div class="t a1" style="left:641px;top:261px;color:#6d6d6d;letter-spacing:-0.412px">All groups</div>
<div style="left:625px;top:281px;width:12px;height:12px;border-radius:50%;border:1px solid #b0b0b0;background:radial-gradient(circle at 40% 35%,#fdfdfd 0,#e4e4e4 60%,#d0d0d0 100%)"></div>
<div class="t a2" style="left:641px;top:280px;color:#6d6d6d;letter-spacing:-0.225px">Selected groups in the list</div>
<div style="left:622px;top:358px;width:158px;height:31px;background:#f0f4fa;border:1px solid #a8a8f0;border-top:none;border-left:1px solid #c8c8f4"></div><div style="left:622px;top:343px;width:158px;height:16px;background:#dce6f6;clip-path:polygon(0 0,147px 0,100% 11px,100% 100%,0 100%)"></div><div class="t g4" style="left:624px;top:344px;color:#1e3a5e;letter-spacing:-0.134px">Tolerance</div>
<div class="t" style="left:625px;top:366px;font-family:'Liberation Serif',serif;font-size:12px">&#916; :</div>
<div style="left:642px;top:363px;width:80px;height:20px;background:#ececec;border:1px solid #6aa4d8;border-right-color:#a8a8a8;border-radius:2px;box-shadow:inset 1px 1px 0 0 #c4dcf0"></div>
<div style="left:644px;top:365px;width:28px;height:16px;background:#ececec"></div>
<div style="left:669px;top:366px;width:1px;height:14px;background:#000"></div>
<div class="t tol" style="left:670px;top:366px;;letter-spacing:-0.093px">0.0100</div>
<div style="left:705px;top:365px;width:16px;height:8px;border:1px solid #b0b0b0;background:#f4f4f4"></div>
<div style="left:705px;top:373px;width:16px;height:8px;border:1px solid #b0b0b0;background:#f4f4f4"></div>
<svg style="left:710px;top:367px" width="6" height="4" viewBox="0 0 6 4" ><path d="M0 3.5 L3 0 L6 3.5Z" fill="#9a9a9a"/></svg>
<svg style="left:710px;top:375px" width="6" height="4" viewBox="0 0 6 4" ><path d="M0 0 L6 0 L3 3.5Z" fill="#9a9a9a"/></svg>
<div class="t" style="left:726px;top:366px;;letter-spacing:-0.560px">[m]</div>
<div style="left:390px;top:397px;width:389px;height:1px;background:#8a8a8a"></div>
<div style="left:390px;top:398px;width:389px;height:1px;background:#fff"></div>
<div class="b" style="left:391px;top:409px;width:25px;height:21px"></div><svg style="left:391px;top:409px" width="25" height="21" viewBox="0 0 25 21" ><ellipse cx="12" cy="9.5" rx="7.5" ry="6.5" fill="#e8ecf8" stroke="#8a90a8"/><path d="M7 14 L5 18 L11 15.5Z" fill="#e8ecf8" stroke="#8a90a8" stroke-width=".8"/><text x="8.8" y="14" font-size="11" font-weight="bold" fill="#2a3aa8" font-family="Liberation Sans">?</text></svg>
<div class="bd" style="left:425px;top:409px;width:25px;height:21px"></div><svg style="left:425px;top:409px" width="25" height="21" viewBox="0 0 25 21" ><rect x="6.5" y="4.5" width="10" height="13" fill="#ecece4" stroke="#b0b0a8"/><path d="M8.5 8 h6 M8.5 11 h6 M8.5 14 h4" stroke="#b8b8b0"/><path d="M13 12 L19 3 L21 4.5 L15 13.5Z" fill="#d0d0c8" stroke="#a8a8a0" stroke-width=".6"/></svg>
<div class="b" style="left:460px;top:409px;width:25px;height:21px"></div><svg style="left:460px;top:409px" width="25" height="21" viewBox="0 0 25 21" ><path d="M6.5 10.5 Q12.5 4.5 18.5 10.5 Q12.5 16.5 6.5 10.5Z" fill="#fff" stroke="#1a1a2a" stroke-width="1.1"/><circle cx="12.5" cy="10.5" r="3" fill="#4a6ae8"/><circle cx="12.5" cy="10.5" r="1.3" fill="#1a2a6a"/></svg>
<div class="b" style="left:494px;top:409px;width:25px;height:21px"></div><svg style="left:494px;top:409px" width="25" height="21" viewBox="0 0 25 21" ><rect x="4.5" y="2.5" width="11" height="11" fill="#a4d8a8" stroke="#2a8a3a"/><path d="M7 5 L13 11 M13 5 L7 11" stroke="#2a8a3a" stroke-width="2"/><path d="M11.5 17.5 L16 10.5 L20.5 17.5Z" fill="#e81818"/></svg>
<div class="b" style="left:529px;top:409px;width:25px;height:21px"></div><svg style="left:529px;top:409px" width="25" height="21" viewBox="0 0 25 21" ><g transform="translate(1,0) scale(.9)"><g opacity="1" stroke-linecap="butt" fill="none"><ellipse cx="9.8" cy="16.1" rx="6.3" ry="1.4" fill="#3c3c3c" stroke="none"/><path d="M6 15.4 h7.6" stroke="#3c3c3c" stroke-width="1"/><path d="M11.8 8.6 C14.8 9.8 15.2 13 13.8 15.4" stroke="#3c3c3c" stroke-width="2.1"/><path d="M14.4 1.8 L7.0 10.2" stroke="#3c3c3c" stroke-width="2.9"/><path d="M14.7 3.1 L8.3 10.3" stroke="#f0f0f0" stroke-width="0.8" opacity=".9"/><path d="M13.0 0.9 L16.0 3.5" stroke="#3c3c3c" stroke-width="1.3"/></g></g><path d="M11.5 17.5 L16 10.5 L20.5 17.5Z" fill="#e81818"/></svg>
<div style="left:623px;top:409px;width:73px;height:21px;border:1px solid #3c7fb1;border-radius:3px;background:linear-gradient(#f2f8fd 0%,#e4f0fa 48%,#cfe4f6 52%,#c0dcf2 100%);box-shadow:inset 0 0 0 1px #48d0f4, inset 0 0 0 2px rgba(255,255,255,.6)"></div>
<div class="t ok" style="left:623px;top:413px;width:73px;text-align:center;letter-spacing:-0.203px">OK</div>
<div class="b" style="left:706px;top:409px;width:73px;height:21px;border-color:#707070"></div>
<div class="t ca" style="left:706px;top:413px;width:73px;text-align:center;letter-spacing:-0.225px">Cancel</div>
<svg style="left:0;top:0" width="1221" height="923" viewBox="0 0 1221 923"><defs><filter id="sh" x="-5%" y="-5%" width="110%" height="110%"><feGaussianBlur stdDeviation="1.8"/></filter></defs><g transform="translate(3.5,4.5)" stroke="#000" fill="#000" opacity=".5" filter="url(#sh)"><line x1="526" y1="427" x2="238.6" y2="504.5" stroke-width="3.6"/><polygon points="224.6,508.3 237.7,497.2 241.5,511.3" stroke="none"/><line x1="534.5" y1="433" x2="182.5" y2="888.6" stroke-width="3.6"/><polygon points="173.6,900.1 177.3,883.4 188.9,892.3" stroke="none"/></g><g stroke="#c4060c" fill="#c4060c"><line x1="526" y1="427" x2="238.6" y2="504.5" stroke-width="3.6"/><polygon points="224.6,508.3 237.7,497.2 241.5,511.3" stroke="none"/><line x1="534.5" y1="433" x2="182.5" y2="888.6" stroke-width="3.6"/><polygon points="173.6,900.1 177.3,883.4 188.9,892.3" stroke="none"/></g></svg>
</body></html>
